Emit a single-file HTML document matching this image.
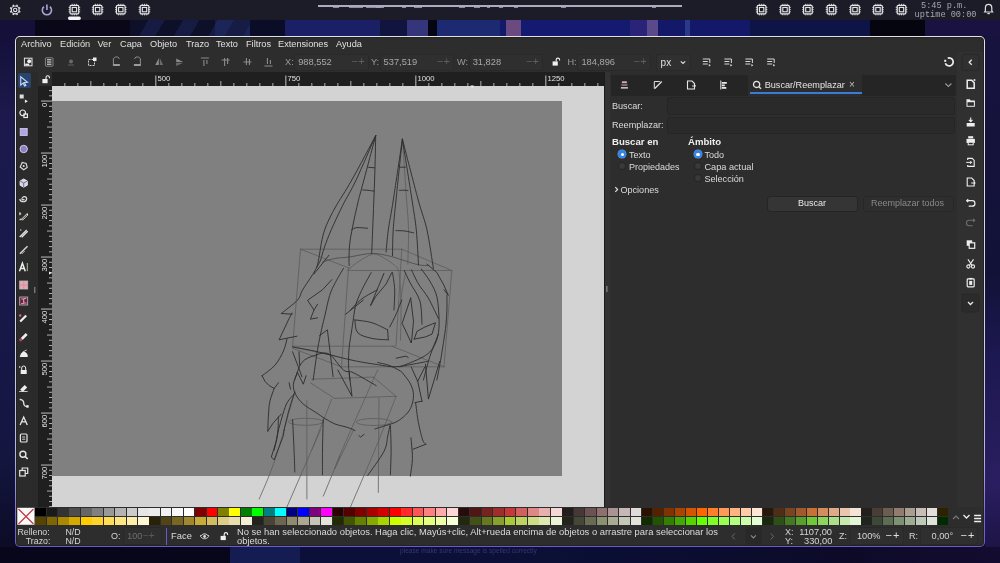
<!DOCTYPE html>
<html><head><meta charset="utf-8"><style>
*{box-sizing:border-box;margin:0;padding:0}
html,body{width:1000px;height:563px;overflow:hidden;background:#0c0a22;font-family:"Liberation Sans",sans-serif;color:#dcdcdc;position:relative}
.a{position:absolute}
.t{position:absolute;white-space:nowrap;line-height:1;transform:translateZ(0)}
svg.o{position:absolute;left:0;top:0;width:1000px;height:563px;overflow:visible}
</style></head><body>
<div class="a" style="left:0px;top:0px;width:1000px;height:563px;background:#0c0a24;"></div>
<div class="a" style="left:0px;top:20px;width:35px;height:16px;background:#15103a;"></div>
<div class="a" style="left:35px;top:20px;width:95px;height:16px;background:#0a0818;"></div>
<div class="a" style="left:130px;top:20px;width:85px;height:16px;background:#0e0f28;"></div>
<div class="a" style="left:215px;top:20px;width:35px;height:16px;background:#161c44;"></div>
<div class="a" style="left:250px;top:20px;width:35px;height:16px;background:#0b0c26;"></div>
<div class="a" style="left:285px;top:20px;width:95px;height:16px;background:#1a1f66;"></div>
<div class="a" style="left:380px;top:20px;width:27px;height:16px;background:#10143e;"></div>
<div class="a" style="left:407px;top:20px;width:21px;height:16px;background:#34357a;"></div>
<div class="a" style="left:428px;top:20px;width:9px;height:16px;background:#050514;"></div>
<div class="a" style="left:437px;top:20px;width:63px;height:16px;background:#1d2a72;"></div>
<div class="a" style="left:500px;top:20px;width:6px;height:16px;background:#141a6a;"></div>
<div class="a" style="left:506px;top:20px;width:15px;height:16px;background:#6a4a80;"></div>
<div class="a" style="left:521px;top:20px;width:109px;height:16px;background:#141a70;"></div>
<div class="a" style="left:630px;top:20px;width:17px;height:16px;background:#2a2478;"></div>
<div class="a" style="left:647px;top:20px;width:11px;height:16px;background:#5a4a8a;"></div>
<div class="a" style="left:658px;top:20px;width:27px;height:16px;background:#131968;"></div>
<div class="a" style="left:685px;top:20px;width:5px;height:16px;background:#2a3a8a;"></div>
<div class="a" style="left:690px;top:20px;width:60px;height:16px;background:#131968;"></div>
<div class="a" style="left:750px;top:20px;width:120px;height:16px;background:#0e1446;"></div>
<div class="a" style="left:870px;top:20px;width:55px;height:16px;background:#050510;"></div>
<div class="a" style="left:925px;top:20px;width:75px;height:16px;background:#1a1240;"></div>
<div class="a" style="left:130px;top:20px;width:120px;height:16px;background:repeating-linear-gradient(120deg,transparent 0 16px,rgba(40,60,140,.28) 16px 30px)"></div>
<div class="a" style="left:0;top:36px;width:15px;height:527px;background:linear-gradient(180deg,#14103a 0%,#1c1a4c 15%,#18184a 50%,#141640 80%,#0a0a20 100%)"></div>
<div class="a" style="left:985px;top:36px;width:15px;height:527px;background:linear-gradient(180deg,#17133f 0%,#121238 45%,#1c1850 60%,#2a1e60 85%,#1a1240 100%)"></div>
<div class="a" style="left:0px;top:547px;width:230px;height:16px;background:#07061a;"></div>
<div class="a" style="left:230px;top:547px;width:70px;height:16px;background:#141c52;"></div>
<div class="a" style="left:300px;top:547px;width:200px;height:16px;background:#0c1038;"></div>
<div class="a" style="left:500px;top:547px;width:500px;height:16px;background:linear-gradient(90deg,#0c1038 0%,#0b0d30 40%,#0d0a28 70%,#140c30 100%)"></div>
<span class="t" style="left:400px;top:548.2px;font-size:6.6px;color:#34386e;font-weight:normal;font-family:'Liberation Sans',sans-serif;">please make sure message is spelled correctly</span>
<div class="a" style="left:0px;top:0px;width:1000px;height:20px;background:#1b1c28;"></div>
<span class="t" style="left:921px;top:1.8px;font-size:8.6px;color:#a4a4b4;font-weight:normal;font-family:'Liberation Mono',sans-serif;">5:45 p.m.</span>
<span class="t" style="left:914.6px;top:10.6px;font-size:8.6px;color:#a4a4b4;font-weight:normal;font-family:'Liberation Mono',sans-serif;">uptime 00:00</span>
<div class="a" style="left:15px;top:36px;width:970px;height:511px;border-radius:5px;background:linear-gradient(180deg,#e2e2e6 0%,#d2d2da 60%,#b8b2dc 82%,#7a6ad4 94%,#6a5acc 100%)"></div>
<div class="a" style="left:16.2px;top:37.2px;width:967.6px;height:508.6px;background:#222222;border-radius:4px"></div>
<div class="a" style="left:17px;top:38px;width:966px;height:507px;background:#2d2d2d;border-radius:3px"></div>
<span class="t" style="left:21px;top:40px;font-size:9.2px;color:#e0e0e0;font-weight:normal;font-family:'Liberation Sans',sans-serif;">Archivo</span>
<span class="t" style="left:60px;top:40px;font-size:9.2px;color:#e0e0e0;font-weight:normal;font-family:'Liberation Sans',sans-serif;">Edición</span>
<span class="t" style="left:97.5px;top:40px;font-size:9.2px;color:#e0e0e0;font-weight:normal;font-family:'Liberation Sans',sans-serif;">Ver</span>
<span class="t" style="left:120px;top:40px;font-size:9.2px;color:#e0e0e0;font-weight:normal;font-family:'Liberation Sans',sans-serif;">Capa</span>
<span class="t" style="left:150px;top:40px;font-size:9.2px;color:#e0e0e0;font-weight:normal;font-family:'Liberation Sans',sans-serif;">Objeto</span>
<span class="t" style="left:186px;top:40px;font-size:9.2px;color:#e0e0e0;font-weight:normal;font-family:'Liberation Sans',sans-serif;">Trazo</span>
<span class="t" style="left:216px;top:40px;font-size:9.2px;color:#e0e0e0;font-weight:normal;font-family:'Liberation Sans',sans-serif;">Texto</span>
<span class="t" style="left:246px;top:40px;font-size:9.2px;color:#e0e0e0;font-weight:normal;font-family:'Liberation Sans',sans-serif;">Filtros</span>
<span class="t" style="left:278px;top:40px;font-size:9.2px;color:#e0e0e0;font-weight:normal;font-family:'Liberation Sans',sans-serif;">Extensiones</span>
<span class="t" style="left:336px;top:40px;font-size:9.2px;color:#e0e0e0;font-weight:normal;font-family:'Liberation Sans',sans-serif;">Ayuda</span>
<span class="t" style="left:285px;top:58px;font-size:9.2px;color:#9a9a9a;font-weight:normal;font-family:'Liberation Sans',sans-serif;">X:</span>
<div class="a" style="left:294px;top:53.5px;width:75px;height:17px;border:1px solid #292929;background:#2f2f2f;border-radius:3px"></div>
<span class="t" style="left:298.2px;top:58px;font-size:9.3px;color:#a8a8a8;font-weight:normal;font-family:'Liberation Sans',sans-serif;">988,552</span>
<span class="t" style="left:351.5px;top:56.2px;font-size:11px;color:#5f5f5f;font-weight:normal;font-family:'Liberation Sans',sans-serif;letter-spacing:0.3px">−+</span>
<span class="t" style="left:371px;top:58px;font-size:9.2px;color:#9a9a9a;font-weight:normal;font-family:'Liberation Sans',sans-serif;">Y:</span>
<div class="a" style="left:379.5px;top:53.5px;width:74.5px;height:17px;border:1px solid #292929;background:#2f2f2f;border-radius:3px"></div>
<span class="t" style="left:383.6px;top:58px;font-size:9.3px;color:#a8a8a8;font-weight:normal;font-family:'Liberation Sans',sans-serif;">537,519</span>
<span class="t" style="left:436.9px;top:56.2px;font-size:11px;color:#5f5f5f;font-weight:normal;font-family:'Liberation Sans',sans-serif;letter-spacing:0.3px">−+</span>
<span class="t" style="left:457px;top:58px;font-size:9.2px;color:#9a9a9a;font-weight:normal;font-family:'Liberation Sans',sans-serif;">W:</span>
<div class="a" style="left:469px;top:53.5px;width:74px;height:17px;border:1px solid #292929;background:#2f2f2f;border-radius:3px"></div>
<span class="t" style="left:472.7px;top:58px;font-size:9.3px;color:#a8a8a8;font-weight:normal;font-family:'Liberation Sans',sans-serif;">31,828</span>
<span class="t" style="left:525.9px;top:56.2px;font-size:11px;color:#5f5f5f;font-weight:normal;font-family:'Liberation Sans',sans-serif;letter-spacing:0.3px">−+</span>
<span class="t" style="left:567.4px;top:58px;font-size:9.2px;color:#9a9a9a;font-weight:normal;font-family:'Liberation Sans',sans-serif;">H:</span>
<div class="a" style="left:576.6px;top:53.5px;width:74.79999999999995px;height:17px;border:1px solid #292929;background:#2f2f2f;border-radius:3px"></div>
<span class="t" style="left:581.4px;top:58px;font-size:9.3px;color:#a8a8a8;font-weight:normal;font-family:'Liberation Sans',sans-serif;">184,896</span>
<span class="t" style="left:633.5px;top:56.2px;font-size:11px;color:#5f5f5f;font-weight:normal;font-family:'Liberation Sans',sans-serif;letter-spacing:0.3px">−+</span>
<div class="a" style="left:655.8px;top:53.5px;width:35.6px;height:17px;border:1px solid #292929;background:#303030;border-radius:3px"></div>
<span class="t" style="left:660.6px;top:57.5px;font-size:10px;color:#e0e0e0;font-weight:normal;font-family:'Liberation Sans',sans-serif;">px</span>
<div class="a" style="left:17px;top:72px;width:14px;height:435px;background:#2b2b2b;"></div>
<div class="a" style="left:31px;top:72px;width:7px;height:435px;background:#2a2a2a;"></div>
<div class="a" style="left:17.5px;top:73px;width:13px;height:14.5px;background:#2a4470;border-radius:2px"></div>
<div class="a" style="left:52px;top:72px;width:552px;height:14px;background:#1f1f1f;"></div>
<div class="a" style="left:38px;top:86px;width:14px;height:421px;background:#1f1f1f;"></div>
<div class="a" style="left:52px;top:86px;width:552px;height:421px;background:#d3d3d3;"></div>
<div class="a" style="left:52px;top:101px;width:510px;height:375px;background:#808080;"></div>
<div class="a" style="left:604px;top:72px;width:6px;height:435px;background:#333333;"></div>
<div class="a" style="left:604px;top:72px;width:1px;height:435px;background:#1c1c1c;"></div>
<div class="a" style="left:610px;top:72px;width:347px;height:435px;background:#2d2d2d;"></div>
<div class="a" style="left:611px;top:75px;width:345px;height:21px;background:#252525;"></div>
<div class="a" style="left:748px;top:75px;width:114px;height:21px;background:#2c2c2c;"></div>
<div class="a" style="left:750px;top:92px;width:112px;height:2px;background:#3a7bd5;"></div>
<div class="a" style="left:957px;top:52px;width:26px;height:455px;background:#303030;"></div>
<span class="t" style="left:612px;top:101.5px;font-size:9.1px;color:#dcdcdc;font-weight:normal;font-family:'Liberation Sans',sans-serif;">Buscar:</span>
<div class="a" style="left:666.5px;top:96.8px;width:288px;height:18px;border:1px solid #252525;background:#2a2a2a;border-radius:3px"></div>
<span class="t" style="left:612px;top:121px;font-size:9.1px;color:#dcdcdc;font-weight:normal;font-family:'Liberation Sans',sans-serif;">Reemplazar:</span>
<div class="a" style="left:666.5px;top:117px;width:288px;height:16.5px;border:1px solid #252525;background:#2a2a2a;border-radius:3px"></div>
<span class="t" style="left:612px;top:136.5px;font-size:9.6px;color:#eeeeee;font-weight:bold;font-family:'Liberation Sans',sans-serif;">Buscar en</span>
<span class="t" style="left:688px;top:136.5px;font-size:9.6px;color:#eeeeee;font-weight:bold;font-family:'Liberation Sans',sans-serif;">Ámbito</span>
<div class="a" style="left:618.4px;top:150.4px;width:8px;height:8px;border-radius:50%;background:#3584e4;box-shadow:0 0 0 0.5px #5a9ae8"></div>
<div class="a" style="left:620.8px;top:152.8px;width:3.2px;height:3.2px;border-radius:50%;background:#fff"></div>
<span class="t" style="left:629px;top:150.5px;font-size:9px;color:#dcdcdc;font-weight:normal;font-family:'Liberation Sans',sans-serif;">Texto</span>
<div class="a" style="left:618.4px;top:162.4px;width:8px;height:8px;border-radius:50%;background:#3a3a3a;border:1px solid #242424"></div>
<span class="t" style="left:629px;top:162.5px;font-size:9px;color:#dcdcdc;font-weight:normal;font-family:'Liberation Sans',sans-serif;">Propiedades</span>
<div class="a" style="left:694px;top:150.4px;width:8px;height:8px;border-radius:50%;background:#3584e4;box-shadow:0 0 0 0.5px #5a9ae8"></div>
<div class="a" style="left:696.4px;top:152.8px;width:3.2px;height:3.2px;border-radius:50%;background:#fff"></div>
<span class="t" style="left:704.4px;top:150.5px;font-size:9px;color:#dcdcdc;font-weight:normal;font-family:'Liberation Sans',sans-serif;">Todo</span>
<div class="a" style="left:694px;top:162.4px;width:8px;height:8px;border-radius:50%;background:#3a3a3a;border:1px solid #242424"></div>
<span class="t" style="left:704.4px;top:162.5px;font-size:9.2px;color:#dcdcdc;font-weight:normal;font-family:'Liberation Sans',sans-serif;">Capa actual</span>
<div class="a" style="left:694px;top:174.4px;width:8px;height:8px;border-radius:50%;background:#3a3a3a;border:1px solid #242424"></div>
<span class="t" style="left:704.4px;top:174.5px;font-size:9.1px;color:#dcdcdc;font-weight:normal;font-family:'Liberation Sans',sans-serif;">Selección</span>
<span class="t" style="left:620.4px;top:185.5px;font-size:9.1px;color:#dcdcdc;font-weight:normal;font-family:'Liberation Sans',sans-serif;">Opciones</span>
<div class="a" style="left:766.6px;top:195.5px;width:91.6px;height:16px;border:1px solid #252525;background:#353535;border-radius:3px"></div>
<span class="t" style="left:798px;top:199px;font-size:9px;color:#e8e8e8;font-weight:normal;font-family:'Liberation Sans',sans-serif;">Buscar</span>
<div class="a" style="left:862.7px;top:195.5px;width:91.6px;height:16px;border:1px solid #282828;background:#2e2e2e;border-radius:3px"></div>
<span class="t" style="left:871px;top:199px;font-size:9px;color:#8a8a8a;font-weight:normal;font-family:'Liberation Sans',sans-serif;">Reemplazar todos</span>
<span class="t" style="left:764.7px;top:80.5px;font-size:9.15px;color:#e4e4e4;font-weight:normal;font-family:'Liberation Sans',sans-serif;">Buscar/Reemplazar</span>
<span class="t" style="left:849px;top:80px;font-size:10px;color:#bdbdbd;font-weight:normal;font-family:'Liberation Sans',sans-serif;">×</span>
<svg class="o" viewBox="0 0 1000 563" style="shape-rendering:crispEdges"><defs><clipPath id="pc"><rect x="35" y="505" width="913.5" height="22"/></clipPath></defs><g clip-path="url(#pc)"><rect x="35.20" y="507.8" width="10.62" height="8.2" fill="#000000"/><rect x="35.20" y="516.6" width="10.62" height="8.4" fill="#554400"/><rect x="46.62" y="507.8" width="10.62" height="8.2" fill="#1a1a1a"/><rect x="46.62" y="516.6" width="10.62" height="8.4" fill="#806600"/><rect x="58.04" y="507.8" width="10.62" height="8.2" fill="#333333"/><rect x="58.04" y="516.6" width="10.62" height="8.4" fill="#aa8800"/><rect x="69.46" y="507.8" width="10.62" height="8.2" fill="#4d4d4d"/><rect x="69.46" y="516.6" width="10.62" height="8.4" fill="#d4aa00"/><rect x="80.89" y="507.8" width="10.62" height="8.2" fill="#666666"/><rect x="80.89" y="516.6" width="10.62" height="8.4" fill="#ffcc00"/><rect x="92.31" y="507.8" width="10.62" height="8.2" fill="#808080"/><rect x="92.31" y="516.6" width="10.62" height="8.4" fill="#ffd42a"/><rect x="103.73" y="507.8" width="10.62" height="8.2" fill="#999999"/><rect x="103.73" y="516.6" width="10.62" height="8.4" fill="#ffdd55"/><rect x="115.15" y="507.8" width="10.62" height="8.2" fill="#b3b3b3"/><rect x="115.15" y="516.6" width="10.62" height="8.4" fill="#ffe680"/><rect x="126.57" y="507.8" width="10.62" height="8.2" fill="#cccccc"/><rect x="126.57" y="516.6" width="10.62" height="8.4" fill="#ffeeaa"/><rect x="137.99" y="507.8" width="10.62" height="8.2" fill="#e6e6e6"/><rect x="137.99" y="516.6" width="10.62" height="8.4" fill="#fff6d5"/><rect x="149.41" y="507.8" width="10.62" height="8.2" fill="#ececec"/><rect x="149.41" y="516.6" width="10.62" height="8.4" fill="#28220b"/><rect x="160.84" y="507.8" width="10.62" height="8.2" fill="#f2f2f2"/><rect x="160.84" y="516.6" width="10.62" height="8.4" fill="#504416"/><rect x="172.26" y="507.8" width="10.62" height="8.2" fill="#f9f9f9"/><rect x="172.26" y="516.6" width="10.62" height="8.4" fill="#786721"/><rect x="183.68" y="507.8" width="10.62" height="8.2" fill="#ffffff"/><rect x="183.68" y="516.6" width="10.62" height="8.4" fill="#a0892c"/><rect x="195.10" y="507.8" width="10.66" height="8.2" fill="#800000"/><rect x="195.10" y="516.6" width="10.66" height="8.4" fill="#c8ab37"/><rect x="206.56" y="507.8" width="10.66" height="8.2" fill="#ff0000"/><rect x="206.56" y="516.6" width="10.66" height="8.4" fill="#d3bc5f"/><rect x="218.01" y="507.8" width="10.66" height="8.2" fill="#808000"/><rect x="218.01" y="516.6" width="10.66" height="8.4" fill="#decd87"/><rect x="229.47" y="507.8" width="10.66" height="8.2" fill="#ffff00"/><rect x="229.47" y="516.6" width="10.66" height="8.4" fill="#e9ddaf"/><rect x="240.93" y="507.8" width="10.66" height="8.2" fill="#008000"/><rect x="240.93" y="516.6" width="10.66" height="8.4" fill="#f4eed7"/><rect x="252.38" y="507.8" width="10.66" height="8.2" fill="#00ff00"/><rect x="252.38" y="516.6" width="10.66" height="8.4" fill="#24221c"/><rect x="263.84" y="507.8" width="10.66" height="8.2" fill="#008080"/><rect x="263.84" y="516.6" width="10.66" height="8.4" fill="#484537"/><rect x="275.30" y="507.8" width="10.66" height="8.2" fill="#00ffff"/><rect x="275.30" y="516.6" width="10.66" height="8.4" fill="#6c6753"/><rect x="286.75" y="507.8" width="10.66" height="8.2" fill="#000080"/><rect x="286.75" y="516.6" width="10.66" height="8.4" fill="#918a6f"/><rect x="298.21" y="507.8" width="10.66" height="8.2" fill="#0000ff"/><rect x="298.21" y="516.6" width="10.66" height="8.4" fill="#aca793"/><rect x="309.67" y="507.8" width="10.66" height="8.2" fill="#800080"/><rect x="309.67" y="516.6" width="10.66" height="8.4" fill="#c8c4b7"/><rect x="321.12" y="507.8" width="10.66" height="8.2" fill="#ff00ff"/><rect x="321.12" y="516.6" width="10.66" height="8.4" fill="#e3e2db"/><rect x="332.58" y="507.8" width="10.66" height="8.2" fill="#2b0000"/><rect x="332.58" y="516.6" width="10.66" height="8.4" fill="#222b00"/><rect x="344.03" y="507.8" width="10.66" height="8.2" fill="#550000"/><rect x="344.03" y="516.6" width="10.66" height="8.4" fill="#445500"/><rect x="355.49" y="507.8" width="10.66" height="8.2" fill="#800000"/><rect x="355.49" y="516.6" width="10.66" height="8.4" fill="#668000"/><rect x="366.95" y="507.8" width="10.66" height="8.2" fill="#aa0000"/><rect x="366.95" y="516.6" width="10.66" height="8.4" fill="#88aa00"/><rect x="378.40" y="507.8" width="10.66" height="8.2" fill="#d40000"/><rect x="378.40" y="516.6" width="10.66" height="8.4" fill="#aad400"/><rect x="389.86" y="507.8" width="10.66" height="8.2" fill="#ff0000"/><rect x="389.86" y="516.6" width="10.66" height="8.4" fill="#ccff00"/><rect x="401.32" y="507.8" width="10.66" height="8.2" fill="#ff2a2a"/><rect x="401.32" y="516.6" width="10.66" height="8.4" fill="#d4ff2a"/><rect x="412.77" y="507.8" width="10.66" height="8.2" fill="#ff5555"/><rect x="412.77" y="516.6" width="10.66" height="8.4" fill="#ddff55"/><rect x="424.23" y="507.8" width="10.66" height="8.2" fill="#ff8080"/><rect x="424.23" y="516.6" width="10.66" height="8.4" fill="#e5ff80"/><rect x="435.69" y="507.8" width="10.66" height="8.2" fill="#ffaaaa"/><rect x="435.69" y="516.6" width="10.66" height="8.4" fill="#eeffaa"/><rect x="447.14" y="507.8" width="10.66" height="8.2" fill="#ffd5d5"/><rect x="447.14" y="516.6" width="10.66" height="8.4" fill="#f6ffd5"/><rect x="458.60" y="507.8" width="10.73" height="8.2" fill="#280b0b"/><rect x="458.60" y="516.6" width="10.73" height="8.4" fill="#22280b"/><rect x="470.13" y="507.8" width="10.73" height="8.2" fill="#501616"/><rect x="470.13" y="516.6" width="10.73" height="8.4" fill="#445016"/><rect x="481.67" y="507.8" width="10.73" height="8.2" fill="#782121"/><rect x="481.67" y="516.6" width="10.73" height="8.4" fill="#677821"/><rect x="493.20" y="507.8" width="10.73" height="8.2" fill="#a02c2c"/><rect x="493.20" y="516.6" width="10.73" height="8.4" fill="#89a02c"/><rect x="504.73" y="507.8" width="10.73" height="8.2" fill="#c83737"/><rect x="504.73" y="516.6" width="10.73" height="8.4" fill="#abc837"/><rect x="516.27" y="507.8" width="10.73" height="8.2" fill="#d35f5f"/><rect x="516.27" y="516.6" width="10.73" height="8.4" fill="#bcd35f"/><rect x="527.80" y="507.8" width="10.73" height="8.2" fill="#de8787"/><rect x="527.80" y="516.6" width="10.73" height="8.4" fill="#cdde87"/><rect x="539.33" y="507.8" width="10.73" height="8.2" fill="#e9afaf"/><rect x="539.33" y="516.6" width="10.73" height="8.4" fill="#dde9af"/><rect x="550.87" y="507.8" width="10.73" height="8.2" fill="#f4d7d7"/><rect x="550.87" y="516.6" width="10.73" height="8.4" fill="#eef4d7"/><rect x="562.40" y="507.8" width="10.57" height="8.2" fill="#241c1c"/><rect x="562.40" y="516.6" width="10.57" height="8.4" fill="#22241c"/><rect x="573.77" y="507.8" width="10.57" height="8.2" fill="#483737"/><rect x="573.77" y="516.6" width="10.57" height="8.4" fill="#454837"/><rect x="585.14" y="507.8" width="10.57" height="8.2" fill="#6c5353"/><rect x="585.14" y="516.6" width="10.57" height="8.4" fill="#676c53"/><rect x="596.51" y="507.8" width="10.57" height="8.2" fill="#916f6f"/><rect x="596.51" y="516.6" width="10.57" height="8.4" fill="#8a916f"/><rect x="607.89" y="507.8" width="10.57" height="8.2" fill="#ac9393"/><rect x="607.89" y="516.6" width="10.57" height="8.4" fill="#a7ac93"/><rect x="619.26" y="507.8" width="10.57" height="8.2" fill="#c8b7b7"/><rect x="619.26" y="516.6" width="10.57" height="8.4" fill="#c4c8b7"/><rect x="630.63" y="507.8" width="10.57" height="8.2" fill="#e3dbdb"/><rect x="630.63" y="516.6" width="10.57" height="8.4" fill="#e2e3db"/><rect x="642.00" y="507.8" width="10.20" height="8.2" fill="#2b1100"/><rect x="642.00" y="516.6" width="10.20" height="8.4" fill="#112b00"/><rect x="653.00" y="507.8" width="10.20" height="8.2" fill="#552200"/><rect x="653.00" y="516.6" width="10.20" height="8.4" fill="#225500"/><rect x="664.00" y="507.8" width="10.20" height="8.2" fill="#803300"/><rect x="664.00" y="516.6" width="10.20" height="8.4" fill="#338000"/><rect x="675.00" y="507.8" width="10.20" height="8.2" fill="#aa4400"/><rect x="675.00" y="516.6" width="10.20" height="8.4" fill="#44aa00"/><rect x="686.00" y="507.8" width="10.20" height="8.2" fill="#d45500"/><rect x="686.00" y="516.6" width="10.20" height="8.4" fill="#55d400"/><rect x="697.00" y="507.8" width="10.20" height="8.2" fill="#ff6600"/><rect x="697.00" y="516.6" width="10.20" height="8.4" fill="#66ff00"/><rect x="708.00" y="507.8" width="10.20" height="8.2" fill="#ff7f2a"/><rect x="708.00" y="516.6" width="10.20" height="8.4" fill="#7fff2a"/><rect x="719.00" y="507.8" width="10.20" height="8.2" fill="#ff9955"/><rect x="719.00" y="516.6" width="10.20" height="8.4" fill="#99ff55"/><rect x="730.00" y="507.8" width="10.20" height="8.2" fill="#ffb380"/><rect x="730.00" y="516.6" width="10.20" height="8.4" fill="#b3ff80"/><rect x="741.00" y="507.8" width="10.20" height="8.2" fill="#ffccaa"/><rect x="741.00" y="516.6" width="10.20" height="8.4" fill="#ccffaa"/><rect x="752.00" y="507.8" width="10.20" height="8.2" fill="#ffe6d5"/><rect x="752.00" y="516.6" width="10.20" height="8.4" fill="#e5ffd5"/><rect x="763.00" y="507.8" width="10.13" height="8.2" fill="#28170b"/><rect x="763.00" y="516.6" width="10.13" height="8.4" fill="#17280b"/><rect x="773.93" y="507.8" width="10.13" height="8.2" fill="#502d16"/><rect x="773.93" y="516.6" width="10.13" height="8.4" fill="#2d5016"/><rect x="784.87" y="507.8" width="10.13" height="8.2" fill="#784421"/><rect x="784.87" y="516.6" width="10.13" height="8.4" fill="#447821"/><rect x="795.80" y="507.8" width="10.13" height="8.2" fill="#a05a2c"/><rect x="795.80" y="516.6" width="10.13" height="8.4" fill="#5aa02c"/><rect x="806.73" y="507.8" width="10.13" height="8.2" fill="#c87137"/><rect x="806.73" y="516.6" width="10.13" height="8.4" fill="#71c837"/><rect x="817.67" y="507.8" width="10.13" height="8.2" fill="#d38d5f"/><rect x="817.67" y="516.6" width="10.13" height="8.4" fill="#8dd35f"/><rect x="828.60" y="507.8" width="10.13" height="8.2" fill="#deaa87"/><rect x="828.60" y="516.6" width="10.13" height="8.4" fill="#aade87"/><rect x="839.53" y="507.8" width="10.13" height="8.2" fill="#e9c6af"/><rect x="839.53" y="516.6" width="10.13" height="8.4" fill="#c6e9af"/><rect x="850.47" y="507.8" width="10.13" height="8.2" fill="#f4e3d7"/><rect x="850.47" y="516.6" width="10.13" height="8.4" fill="#e3f4d7"/><rect x="861.40" y="507.8" width="10.10" height="8.2" fill="#241f1c"/><rect x="861.40" y="516.6" width="10.10" height="8.4" fill="#1f241c"/><rect x="872.30" y="507.8" width="10.10" height="8.2" fill="#483e37"/><rect x="872.30" y="516.6" width="10.10" height="8.4" fill="#3e4837"/><rect x="883.20" y="507.8" width="10.10" height="8.2" fill="#6c5d53"/><rect x="883.20" y="516.6" width="10.10" height="8.4" fill="#5d6c53"/><rect x="894.10" y="507.8" width="10.10" height="8.2" fill="#917c6f"/><rect x="894.10" y="516.6" width="10.10" height="8.4" fill="#7c916f"/><rect x="905.00" y="507.8" width="10.10" height="8.2" fill="#ac9d93"/><rect x="905.00" y="516.6" width="10.10" height="8.4" fill="#9dac93"/><rect x="915.90" y="507.8" width="10.10" height="8.2" fill="#c8beb7"/><rect x="915.90" y="516.6" width="10.10" height="8.4" fill="#bec8b7"/><rect x="926.80" y="507.8" width="10.10" height="8.2" fill="#e3dedb"/><rect x="926.80" y="516.6" width="10.10" height="8.4" fill="#dee3db"/><rect x="937.70" y="507.8" width="10.10" height="8.2" fill="#2b2200"/><rect x="937.70" y="516.6" width="10.10" height="8.4" fill="#002b00"/></g></svg>
<svg class="o" viewBox="0 0 1000 563"><rect x="17.3" y="507.8" width="17.2" height="17" fill="#fafafa"/><path d="M18.5 509 L33.5 524 M33.5 509 L18.5 524" stroke="#c0343c" stroke-width="1.1"/></svg>
<span class="t" style="left:17.4px;top:527.6px;font-size:8.8px;color:#d6d6d6;font-weight:normal;font-family:'Liberation Sans',sans-serif;">Relleno:</span>
<span class="t" style="left:65.4px;top:527.6px;font-size:8.8px;color:#d6d6d6;font-weight:normal;font-family:'Liberation Sans',sans-serif;">N/D</span>
<span class="t" style="left:25.8px;top:536.6px;font-size:8.8px;color:#d6d6d6;font-weight:normal;font-family:'Liberation Sans',sans-serif;">Trazo:</span>
<span class="t" style="left:65.4px;top:536.6px;font-size:8.8px;color:#d6d6d6;font-weight:normal;font-family:'Liberation Sans',sans-serif;">N/D</span>
<span class="t" style="left:111px;top:531.5px;font-size:9px;color:#d6d6d6;font-weight:normal;font-family:'Liberation Sans',sans-serif;">O:</span>
<div class="a" style="left:123px;top:527px;width:38.5px;height:18px;border:1px solid #292929;background:#2f2f2f;border-radius:3px"></div>
<span class="t" style="left:127.3px;top:531.5px;font-size:9px;color:#6f6f6f;font-weight:normal;font-family:'Liberation Sans',sans-serif;">100</span>
<span class="t" style="left:143px;top:531px;font-size:10px;color:#5a5a5a;font-weight:normal;font-family:'Liberation Sans',sans-serif;">−+</span>
<div class="a" style="left:166.2px;top:527.5px;width:1.3px;height:17px;background:#6a5ad0;"></div>
<span class="t" style="left:171px;top:531px;font-size:9.4px;color:#dcdcdc;font-weight:normal;font-family:'Liberation Sans',sans-serif;">Face</span>
<span class="t" style="left:237px;top:527px;font-size:9.4px;color:#dcdcdc;font-weight:normal;font-family:'Liberation Sans',sans-serif;">No se han seleccionado objetos. Haga clic, Mayús+clic, Alt+rueda encima de objetos o arrastre para seleccionar los</span>
<span class="t" style="left:237px;top:535.8px;font-size:9.4px;color:#dcdcdc;font-weight:normal;font-family:'Liberation Sans',sans-serif;">objetos.</span>
<div class="a" style="left:744.8px;top:526.5px;width:17.6px;height:18.5px;border:1px solid #2a2a2a;background:#282828;border-radius:2px"></div>
<span class="t" style="left:785px;top:527.6px;font-size:9px;color:#d6d6d6;font-weight:normal;font-family:'Liberation Sans',sans-serif;">X:</span>
<span class="t" style="left:799.2px;top:527.6px;font-size:9.26px;color:#d6d6d6;font-weight:normal;font-family:'Liberation Sans',sans-serif;">1107,00</span>
<span class="t" style="left:785px;top:536.6px;font-size:9px;color:#d6d6d6;font-weight:normal;font-family:'Liberation Sans',sans-serif;">Y:</span>
<span class="t" style="left:804px;top:536.6px;font-size:9.26px;color:#d6d6d6;font-weight:normal;font-family:'Liberation Sans',sans-serif;">330,00</span>
<span class="t" style="left:839px;top:531.5px;font-size:9px;color:#d6d6d6;font-weight:normal;font-family:'Liberation Sans',sans-serif;">Z:</span>
<div class="a" style="left:850px;top:527px;width:53.6px;height:17.5px;border:1px solid #292929;background:#2f2f2f;border-radius:3px"></div>
<span class="t" style="left:857px;top:531.5px;font-size:9.2px;color:#d6d6d6;font-weight:normal;font-family:'Liberation Sans',sans-serif;">100%</span>
<span class="t" style="left:885.5px;top:530.2px;font-size:11px;color:#e0e0e0;font-weight:normal;font-family:'Liberation Sans',sans-serif;letter-spacing:1px">−+</span>
<span class="t" style="left:909px;top:531.5px;font-size:9px;color:#d6d6d6;font-weight:normal;font-family:'Liberation Sans',sans-serif;">R:</span>
<div class="a" style="left:919.6px;top:527px;width:58.4px;height:17.5px;border:1px solid #292929;background:#2f2f2f;border-radius:3px"></div>
<span class="t" style="left:931.6px;top:531.5px;font-size:9.2px;color:#d6d6d6;font-weight:normal;font-family:'Liberation Sans',sans-serif;">0,00°</span>
<span class="t" style="left:960.5px;top:530.2px;font-size:11px;color:#e0e0e0;font-weight:normal;font-family:'Liberation Sans',sans-serif;letter-spacing:1px">−+</span>
<svg class="o" viewBox="0 0 1000 563"><rect x="64.4" y="83" width="0.9" height="3" fill="#bdbdbd"/><rect x="77.4" y="83" width="0.9" height="3" fill="#bdbdbd"/><rect x="90.4" y="81" width="0.9" height="5" fill="#bdbdbd"/><rect x="103.4" y="83" width="0.9" height="3" fill="#bdbdbd"/><rect x="116.4" y="83" width="0.9" height="3" fill="#bdbdbd"/><rect x="129.4" y="83" width="0.9" height="3" fill="#bdbdbd"/><rect x="142.4" y="83" width="0.9" height="3" fill="#bdbdbd"/><rect x="155.4" y="75.5" width="0.9" height="10.5" fill="#cfcfcf"/><rect x="168.4" y="83" width="0.9" height="3" fill="#bdbdbd"/><rect x="181.4" y="83" width="0.9" height="3" fill="#bdbdbd"/><rect x="194.4" y="83" width="0.9" height="3" fill="#bdbdbd"/><rect x="207.4" y="83" width="0.9" height="3" fill="#bdbdbd"/><rect x="220.4" y="81" width="0.9" height="5" fill="#bdbdbd"/><rect x="233.4" y="83" width="0.9" height="3" fill="#bdbdbd"/><rect x="246.4" y="83" width="0.9" height="3" fill="#bdbdbd"/><rect x="259.4" y="83" width="0.9" height="3" fill="#bdbdbd"/><rect x="272.4" y="83" width="0.9" height="3" fill="#bdbdbd"/><rect x="285.4" y="75.5" width="0.9" height="10.5" fill="#cfcfcf"/><rect x="298.4" y="83" width="0.9" height="3" fill="#bdbdbd"/><rect x="311.4" y="83" width="0.9" height="3" fill="#bdbdbd"/><rect x="324.4" y="83" width="0.9" height="3" fill="#bdbdbd"/><rect x="337.4" y="83" width="0.9" height="3" fill="#bdbdbd"/><rect x="350.4" y="81" width="0.9" height="5" fill="#bdbdbd"/><rect x="363.4" y="83" width="0.9" height="3" fill="#bdbdbd"/><rect x="376.4" y="83" width="0.9" height="3" fill="#bdbdbd"/><rect x="389.4" y="83" width="0.9" height="3" fill="#bdbdbd"/><rect x="402.4" y="83" width="0.9" height="3" fill="#bdbdbd"/><rect x="415.4" y="75.5" width="0.9" height="10.5" fill="#cfcfcf"/><rect x="428.4" y="83" width="0.9" height="3" fill="#bdbdbd"/><rect x="441.4" y="83" width="0.9" height="3" fill="#bdbdbd"/><rect x="454.4" y="83" width="0.9" height="3" fill="#bdbdbd"/><rect x="467.4" y="83" width="0.9" height="3" fill="#bdbdbd"/><rect x="480.4" y="81" width="0.9" height="5" fill="#bdbdbd"/><rect x="493.4" y="83" width="0.9" height="3" fill="#bdbdbd"/><rect x="506.4" y="83" width="0.9" height="3" fill="#bdbdbd"/><rect x="519.4" y="83" width="0.9" height="3" fill="#bdbdbd"/><rect x="532.4" y="83" width="0.9" height="3" fill="#bdbdbd"/><rect x="545.4" y="75.5" width="0.9" height="10.5" fill="#cfcfcf"/><rect x="558.4" y="83" width="0.9" height="3" fill="#bdbdbd"/><rect x="571.4" y="83" width="0.9" height="3" fill="#bdbdbd"/><rect x="584.4" y="83" width="0.9" height="3" fill="#bdbdbd"/><rect x="597.4" y="83" width="0.9" height="3" fill="#bdbdbd"/><text x="157.5" y="81.3" font-size="7.7" fill="#e0e0e0" font-family="Liberation Sans">500</text><text x="287.5" y="81.3" font-size="7.7" fill="#e0e0e0" font-family="Liberation Sans">750</text><text x="417.5" y="81.3" font-size="7.7" fill="#e0e0e0" font-family="Liberation Sans">1000</text><text x="547.5" y="81.3" font-size="7.7" fill="#e0e0e0" font-family="Liberation Sans">1250</text><rect x="49" y="90.2" width="3" height="0.9" fill="#bdbdbd"/><rect x="49" y="95.4" width="3" height="0.9" fill="#bdbdbd"/><rect x="41" y="100.6" width="11" height="0.9" fill="#cfcfcf"/><rect x="49" y="105.8" width="3" height="0.9" fill="#bdbdbd"/><rect x="49" y="111.0" width="3" height="0.9" fill="#bdbdbd"/><rect x="49" y="116.2" width="3" height="0.9" fill="#bdbdbd"/><rect x="49" y="121.4" width="3" height="0.9" fill="#bdbdbd"/><rect x="47" y="126.6" width="5" height="0.9" fill="#bdbdbd"/><rect x="49" y="131.8" width="3" height="0.9" fill="#bdbdbd"/><rect x="49" y="137.0" width="3" height="0.9" fill="#bdbdbd"/><rect x="49" y="142.2" width="3" height="0.9" fill="#bdbdbd"/><rect x="49" y="147.4" width="3" height="0.9" fill="#bdbdbd"/><rect x="41" y="152.6" width="11" height="0.9" fill="#cfcfcf"/><rect x="49" y="157.8" width="3" height="0.9" fill="#bdbdbd"/><rect x="49" y="163.0" width="3" height="0.9" fill="#bdbdbd"/><rect x="49" y="168.2" width="3" height="0.9" fill="#bdbdbd"/><rect x="49" y="173.4" width="3" height="0.9" fill="#bdbdbd"/><rect x="47" y="178.6" width="5" height="0.9" fill="#bdbdbd"/><rect x="49" y="183.8" width="3" height="0.9" fill="#bdbdbd"/><rect x="49" y="189.0" width="3" height="0.9" fill="#bdbdbd"/><rect x="49" y="194.2" width="3" height="0.9" fill="#bdbdbd"/><rect x="49" y="199.4" width="3" height="0.9" fill="#bdbdbd"/><rect x="41" y="204.6" width="11" height="0.9" fill="#cfcfcf"/><rect x="49" y="209.8" width="3" height="0.9" fill="#bdbdbd"/><rect x="49" y="215.0" width="3" height="0.9" fill="#bdbdbd"/><rect x="49" y="220.2" width="3" height="0.9" fill="#bdbdbd"/><rect x="49" y="225.4" width="3" height="0.9" fill="#bdbdbd"/><rect x="47" y="230.6" width="5" height="0.9" fill="#bdbdbd"/><rect x="49" y="235.8" width="3" height="0.9" fill="#bdbdbd"/><rect x="49" y="241.0" width="3" height="0.9" fill="#bdbdbd"/><rect x="49" y="246.2" width="3" height="0.9" fill="#bdbdbd"/><rect x="49" y="251.4" width="3" height="0.9" fill="#bdbdbd"/><rect x="41" y="256.6" width="11" height="0.9" fill="#cfcfcf"/><rect x="49" y="261.8" width="3" height="0.9" fill="#bdbdbd"/><rect x="49" y="267.0" width="3" height="0.9" fill="#bdbdbd"/><rect x="49" y="272.2" width="3" height="0.9" fill="#bdbdbd"/><rect x="49" y="277.4" width="3" height="0.9" fill="#bdbdbd"/><rect x="47" y="282.6" width="5" height="0.9" fill="#bdbdbd"/><rect x="49" y="287.8" width="3" height="0.9" fill="#bdbdbd"/><rect x="49" y="293.0" width="3" height="0.9" fill="#bdbdbd"/><rect x="49" y="298.2" width="3" height="0.9" fill="#bdbdbd"/><rect x="49" y="303.4" width="3" height="0.9" fill="#bdbdbd"/><rect x="41" y="308.6" width="11" height="0.9" fill="#cfcfcf"/><rect x="49" y="313.8" width="3" height="0.9" fill="#bdbdbd"/><rect x="49" y="319.0" width="3" height="0.9" fill="#bdbdbd"/><rect x="49" y="324.2" width="3" height="0.9" fill="#bdbdbd"/><rect x="49" y="329.4" width="3" height="0.9" fill="#bdbdbd"/><rect x="47" y="334.6" width="5" height="0.9" fill="#bdbdbd"/><rect x="49" y="339.8" width="3" height="0.9" fill="#bdbdbd"/><rect x="49" y="345.0" width="3" height="0.9" fill="#bdbdbd"/><rect x="49" y="350.2" width="3" height="0.9" fill="#bdbdbd"/><rect x="49" y="355.4" width="3" height="0.9" fill="#bdbdbd"/><rect x="41" y="360.6" width="11" height="0.9" fill="#cfcfcf"/><rect x="49" y="365.8" width="3" height="0.9" fill="#bdbdbd"/><rect x="49" y="371.0" width="3" height="0.9" fill="#bdbdbd"/><rect x="49" y="376.2" width="3" height="0.9" fill="#bdbdbd"/><rect x="49" y="381.4" width="3" height="0.9" fill="#bdbdbd"/><rect x="47" y="386.6" width="5" height="0.9" fill="#bdbdbd"/><rect x="49" y="391.8" width="3" height="0.9" fill="#bdbdbd"/><rect x="49" y="397.0" width="3" height="0.9" fill="#bdbdbd"/><rect x="49" y="402.2" width="3" height="0.9" fill="#bdbdbd"/><rect x="49" y="407.4" width="3" height="0.9" fill="#bdbdbd"/><rect x="41" y="412.6" width="11" height="0.9" fill="#cfcfcf"/><rect x="49" y="417.8" width="3" height="0.9" fill="#bdbdbd"/><rect x="49" y="423.0" width="3" height="0.9" fill="#bdbdbd"/><rect x="49" y="428.2" width="3" height="0.9" fill="#bdbdbd"/><rect x="49" y="433.4" width="3" height="0.9" fill="#bdbdbd"/><rect x="47" y="438.6" width="5" height="0.9" fill="#bdbdbd"/><rect x="49" y="443.8" width="3" height="0.9" fill="#bdbdbd"/><rect x="49" y="449.0" width="3" height="0.9" fill="#bdbdbd"/><rect x="49" y="454.2" width="3" height="0.9" fill="#bdbdbd"/><rect x="49" y="459.4" width="3" height="0.9" fill="#bdbdbd"/><rect x="41" y="464.6" width="11" height="0.9" fill="#cfcfcf"/><rect x="49" y="469.8" width="3" height="0.9" fill="#bdbdbd"/><rect x="49" y="475.0" width="3" height="0.9" fill="#bdbdbd"/><rect x="49" y="480.2" width="3" height="0.9" fill="#bdbdbd"/><rect x="49" y="485.4" width="3" height="0.9" fill="#bdbdbd"/><rect x="47" y="490.6" width="5" height="0.9" fill="#bdbdbd"/><rect x="49" y="495.8" width="3" height="0.9" fill="#bdbdbd"/><rect x="49" y="501.0" width="3" height="0.9" fill="#bdbdbd"/><rect x="49" y="506.2" width="3" height="0.9" fill="#bdbdbd"/><text transform="translate(46.6,102.6) rotate(-90)" text-anchor="end" font-size="7.8" fill="#e6e6e6" font-family="Liberation Sans">0</text><text transform="translate(46.6,154.6) rotate(-90)" text-anchor="end" font-size="7.8" fill="#e6e6e6" font-family="Liberation Sans">100</text><text transform="translate(46.6,206.6) rotate(-90)" text-anchor="end" font-size="7.8" fill="#e6e6e6" font-family="Liberation Sans">200</text><text transform="translate(46.6,258.6) rotate(-90)" text-anchor="end" font-size="7.8" fill="#e6e6e6" font-family="Liberation Sans">300</text><text transform="translate(46.6,310.6) rotate(-90)" text-anchor="end" font-size="7.8" fill="#e6e6e6" font-family="Liberation Sans">400</text><text transform="translate(46.6,362.6) rotate(-90)" text-anchor="end" font-size="7.8" fill="#e6e6e6" font-family="Liberation Sans">500</text><text transform="translate(46.6,414.6) rotate(-90)" text-anchor="end" font-size="7.8" fill="#e6e6e6" font-family="Liberation Sans">600</text><text transform="translate(46.6,466.6) rotate(-90)" text-anchor="end" font-size="7.8" fill="#e6e6e6" font-family="Liberation Sans">700</text><path d="M470.5 85.5 L474 85.5 L472.2 88.5 Z" fill="#eee"/><path d="M49 271.5 L52 273 L49 274.5 Z" fill="#eee"/><g transform="translate(15.2,9.9)" fill="none" stroke="#e4e4e4" stroke-width="1.1"><circle r="3.9" stroke-width="1.2"/><circle r="1.7" stroke-width="1.1"/><line x1="3.88" y1="1.61" x2="5.08" y2="2.10" stroke-width="1.5"/><line x1="1.61" y1="3.88" x2="2.10" y2="5.08" stroke-width="1.5"/><line x1="-1.61" y1="3.88" x2="-2.10" y2="5.08" stroke-width="1.5"/><line x1="-3.88" y1="1.61" x2="-5.08" y2="2.10" stroke-width="1.5"/><line x1="-3.88" y1="-1.61" x2="-5.08" y2="-2.10" stroke-width="1.5"/><line x1="-1.61" y1="-3.88" x2="-2.10" y2="-5.08" stroke-width="1.5"/><line x1="1.61" y1="-3.88" x2="2.10" y2="-5.08" stroke-width="1.5"/><line x1="3.88" y1="-1.61" x2="5.08" y2="-2.10" stroke-width="1.5"/></g><g transform="translate(46.9,9.9)" fill="none" stroke="#a6a6d6" stroke-width="1.1"><path d="M-3 -3.2 A4.6 4.6 0 1 0 3 -3.2" stroke-width="1.6"/><line x1="0" y1="-5.4" x2="0" y2="0" stroke-width="1.6"/></g><g transform="translate(74.4,9.6)" fill="none" stroke="#e8e8e8" stroke-width="1.1"><rect x="-4.3" y="-4.3" width="8.6" height="8.6" rx="1" stroke-width="1.2"/><rect x="-2.2" y="-2.2" width="4.4" height="4.4" stroke-width="1.1"/><line x1="-2.2" y1="-5.8" x2="-2.2" y2="-4.3" stroke-width="0.8"/><line x1="-2.2" y1="4.3" x2="-2.2" y2="5.8" stroke-width="0.8"/><line x1="-5.8" y1="-2.2" x2="-4.3" y2="-2.2" stroke-width="0.8"/><line x1="4.3" y1="-2.2" x2="5.8" y2="-2.2" stroke-width="0.8"/><line x1="0" y1="-5.8" x2="0" y2="-4.3" stroke-width="0.8"/><line x1="0" y1="4.3" x2="0" y2="5.8" stroke-width="0.8"/><line x1="-5.8" y1="0" x2="-4.3" y2="0" stroke-width="0.8"/><line x1="4.3" y1="0" x2="5.8" y2="0" stroke-width="0.8"/><line x1="2.2" y1="-5.8" x2="2.2" y2="-4.3" stroke-width="0.8"/><line x1="2.2" y1="4.3" x2="2.2" y2="5.8" stroke-width="0.8"/><line x1="-5.8" y1="2.2" x2="-4.3" y2="2.2" stroke-width="0.8"/><line x1="4.3" y1="2.2" x2="5.8" y2="2.2" stroke-width="0.8"/></g><g transform="translate(97.6,9.6)" fill="none" stroke="#e8e8e8" stroke-width="1.1"><rect x="-4.3" y="-4.3" width="8.6" height="8.6" rx="1" stroke-width="1.2"/><rect x="-2.2" y="-2.2" width="4.4" height="4.4" stroke-width="1.1"/><line x1="-2.2" y1="-5.8" x2="-2.2" y2="-4.3" stroke-width="0.8"/><line x1="-2.2" y1="4.3" x2="-2.2" y2="5.8" stroke-width="0.8"/><line x1="-5.8" y1="-2.2" x2="-4.3" y2="-2.2" stroke-width="0.8"/><line x1="4.3" y1="-2.2" x2="5.8" y2="-2.2" stroke-width="0.8"/><line x1="0" y1="-5.8" x2="0" y2="-4.3" stroke-width="0.8"/><line x1="0" y1="4.3" x2="0" y2="5.8" stroke-width="0.8"/><line x1="-5.8" y1="0" x2="-4.3" y2="0" stroke-width="0.8"/><line x1="4.3" y1="0" x2="5.8" y2="0" stroke-width="0.8"/><line x1="2.2" y1="-5.8" x2="2.2" y2="-4.3" stroke-width="0.8"/><line x1="2.2" y1="4.3" x2="2.2" y2="5.8" stroke-width="0.8"/><line x1="-5.8" y1="2.2" x2="-4.3" y2="2.2" stroke-width="0.8"/><line x1="4.3" y1="2.2" x2="5.8" y2="2.2" stroke-width="0.8"/></g><g transform="translate(120.8,9.6)" fill="none" stroke="#e8e8e8" stroke-width="1.1"><rect x="-4.3" y="-4.3" width="8.6" height="8.6" rx="1" stroke-width="1.2"/><rect x="-2.2" y="-2.2" width="4.4" height="4.4" stroke-width="1.1"/><line x1="-2.2" y1="-5.8" x2="-2.2" y2="-4.3" stroke-width="0.8"/><line x1="-2.2" y1="4.3" x2="-2.2" y2="5.8" stroke-width="0.8"/><line x1="-5.8" y1="-2.2" x2="-4.3" y2="-2.2" stroke-width="0.8"/><line x1="4.3" y1="-2.2" x2="5.8" y2="-2.2" stroke-width="0.8"/><line x1="0" y1="-5.8" x2="0" y2="-4.3" stroke-width="0.8"/><line x1="0" y1="4.3" x2="0" y2="5.8" stroke-width="0.8"/><line x1="-5.8" y1="0" x2="-4.3" y2="0" stroke-width="0.8"/><line x1="4.3" y1="0" x2="5.8" y2="0" stroke-width="0.8"/><line x1="2.2" y1="-5.8" x2="2.2" y2="-4.3" stroke-width="0.8"/><line x1="2.2" y1="4.3" x2="2.2" y2="5.8" stroke-width="0.8"/><line x1="-5.8" y1="2.2" x2="-4.3" y2="2.2" stroke-width="0.8"/><line x1="4.3" y1="2.2" x2="5.8" y2="2.2" stroke-width="0.8"/></g><g transform="translate(144.5,9.6)" fill="none" stroke="#e8e8e8" stroke-width="1.1"><rect x="-4.3" y="-4.3" width="8.6" height="8.6" rx="1" stroke-width="1.2"/><rect x="-2.2" y="-2.2" width="4.4" height="4.4" stroke-width="1.1"/><line x1="-2.2" y1="-5.8" x2="-2.2" y2="-4.3" stroke-width="0.8"/><line x1="-2.2" y1="4.3" x2="-2.2" y2="5.8" stroke-width="0.8"/><line x1="-5.8" y1="-2.2" x2="-4.3" y2="-2.2" stroke-width="0.8"/><line x1="4.3" y1="-2.2" x2="5.8" y2="-2.2" stroke-width="0.8"/><line x1="0" y1="-5.8" x2="0" y2="-4.3" stroke-width="0.8"/><line x1="0" y1="4.3" x2="0" y2="5.8" stroke-width="0.8"/><line x1="-5.8" y1="0" x2="-4.3" y2="0" stroke-width="0.8"/><line x1="4.3" y1="0" x2="5.8" y2="0" stroke-width="0.8"/><line x1="2.2" y1="-5.8" x2="2.2" y2="-4.3" stroke-width="0.8"/><line x1="2.2" y1="4.3" x2="2.2" y2="5.8" stroke-width="0.8"/><line x1="-5.8" y1="2.2" x2="-4.3" y2="2.2" stroke-width="0.8"/><line x1="4.3" y1="2.2" x2="5.8" y2="2.2" stroke-width="0.8"/></g><rect x="68" y="16.6" width="12.8" height="3.3" rx="1.6" fill="#f4f4f4"/><g transform="translate(761.6,9.6)" fill="none" stroke="#e8e8e8" stroke-width="1.1"><rect x="-4.3" y="-4.3" width="8.6" height="8.6" rx="1" stroke-width="1.2"/><rect x="-2.2" y="-2.2" width="4.4" height="4.4" stroke-width="1.1"/><line x1="-2.2" y1="-5.8" x2="-2.2" y2="-4.3" stroke-width="0.8"/><line x1="-2.2" y1="4.3" x2="-2.2" y2="5.8" stroke-width="0.8"/><line x1="-5.8" y1="-2.2" x2="-4.3" y2="-2.2" stroke-width="0.8"/><line x1="4.3" y1="-2.2" x2="5.8" y2="-2.2" stroke-width="0.8"/><line x1="0" y1="-5.8" x2="0" y2="-4.3" stroke-width="0.8"/><line x1="0" y1="4.3" x2="0" y2="5.8" stroke-width="0.8"/><line x1="-5.8" y1="0" x2="-4.3" y2="0" stroke-width="0.8"/><line x1="4.3" y1="0" x2="5.8" y2="0" stroke-width="0.8"/><line x1="2.2" y1="-5.8" x2="2.2" y2="-4.3" stroke-width="0.8"/><line x1="2.2" y1="4.3" x2="2.2" y2="5.8" stroke-width="0.8"/><line x1="-5.8" y1="2.2" x2="-4.3" y2="2.2" stroke-width="0.8"/><line x1="4.3" y1="2.2" x2="5.8" y2="2.2" stroke-width="0.8"/></g><g transform="translate(785,9.6)" fill="none" stroke="#e8e8e8" stroke-width="1.1"><rect x="-4.3" y="-4.3" width="8.6" height="8.6" rx="1" stroke-width="1.2"/><rect x="-2.2" y="-2.2" width="4.4" height="4.4" stroke-width="1.1"/><line x1="-2.2" y1="-5.8" x2="-2.2" y2="-4.3" stroke-width="0.8"/><line x1="-2.2" y1="4.3" x2="-2.2" y2="5.8" stroke-width="0.8"/><line x1="-5.8" y1="-2.2" x2="-4.3" y2="-2.2" stroke-width="0.8"/><line x1="4.3" y1="-2.2" x2="5.8" y2="-2.2" stroke-width="0.8"/><line x1="0" y1="-5.8" x2="0" y2="-4.3" stroke-width="0.8"/><line x1="0" y1="4.3" x2="0" y2="5.8" stroke-width="0.8"/><line x1="-5.8" y1="0" x2="-4.3" y2="0" stroke-width="0.8"/><line x1="4.3" y1="0" x2="5.8" y2="0" stroke-width="0.8"/><line x1="2.2" y1="-5.8" x2="2.2" y2="-4.3" stroke-width="0.8"/><line x1="2.2" y1="4.3" x2="2.2" y2="5.8" stroke-width="0.8"/><line x1="-5.8" y1="2.2" x2="-4.3" y2="2.2" stroke-width="0.8"/><line x1="4.3" y1="2.2" x2="5.8" y2="2.2" stroke-width="0.8"/></g><g transform="translate(807.9,9.6)" fill="none" stroke="#e8e8e8" stroke-width="1.1"><rect x="-4.3" y="-4.3" width="8.6" height="8.6" rx="1" stroke-width="1.2"/><rect x="-2.2" y="-2.2" width="4.4" height="4.4" stroke-width="1.1"/><line x1="-2.2" y1="-5.8" x2="-2.2" y2="-4.3" stroke-width="0.8"/><line x1="-2.2" y1="4.3" x2="-2.2" y2="5.8" stroke-width="0.8"/><line x1="-5.8" y1="-2.2" x2="-4.3" y2="-2.2" stroke-width="0.8"/><line x1="4.3" y1="-2.2" x2="5.8" y2="-2.2" stroke-width="0.8"/><line x1="0" y1="-5.8" x2="0" y2="-4.3" stroke-width="0.8"/><line x1="0" y1="4.3" x2="0" y2="5.8" stroke-width="0.8"/><line x1="-5.8" y1="0" x2="-4.3" y2="0" stroke-width="0.8"/><line x1="4.3" y1="0" x2="5.8" y2="0" stroke-width="0.8"/><line x1="2.2" y1="-5.8" x2="2.2" y2="-4.3" stroke-width="0.8"/><line x1="2.2" y1="4.3" x2="2.2" y2="5.8" stroke-width="0.8"/><line x1="-5.8" y1="2.2" x2="-4.3" y2="2.2" stroke-width="0.8"/><line x1="4.3" y1="2.2" x2="5.8" y2="2.2" stroke-width="0.8"/></g><g transform="translate(831.5,9.6)" fill="none" stroke="#e8e8e8" stroke-width="1.1"><rect x="-4.3" y="-4.3" width="8.6" height="8.6" rx="1" stroke-width="1.2"/><rect x="-2.2" y="-2.2" width="4.4" height="4.4" stroke-width="1.1"/><line x1="-2.2" y1="-5.8" x2="-2.2" y2="-4.3" stroke-width="0.8"/><line x1="-2.2" y1="4.3" x2="-2.2" y2="5.8" stroke-width="0.8"/><line x1="-5.8" y1="-2.2" x2="-4.3" y2="-2.2" stroke-width="0.8"/><line x1="4.3" y1="-2.2" x2="5.8" y2="-2.2" stroke-width="0.8"/><line x1="0" y1="-5.8" x2="0" y2="-4.3" stroke-width="0.8"/><line x1="0" y1="4.3" x2="0" y2="5.8" stroke-width="0.8"/><line x1="-5.8" y1="0" x2="-4.3" y2="0" stroke-width="0.8"/><line x1="4.3" y1="0" x2="5.8" y2="0" stroke-width="0.8"/><line x1="2.2" y1="-5.8" x2="2.2" y2="-4.3" stroke-width="0.8"/><line x1="2.2" y1="4.3" x2="2.2" y2="5.8" stroke-width="0.8"/><line x1="-5.8" y1="2.2" x2="-4.3" y2="2.2" stroke-width="0.8"/><line x1="4.3" y1="2.2" x2="5.8" y2="2.2" stroke-width="0.8"/></g><g transform="translate(855,9.6)" fill="none" stroke="#e8e8e8" stroke-width="1.1"><rect x="-4.3" y="-4.3" width="8.6" height="8.6" rx="1" stroke-width="1.2"/><rect x="-2.2" y="-2.2" width="4.4" height="4.4" stroke-width="1.1"/><line x1="-2.2" y1="-5.8" x2="-2.2" y2="-4.3" stroke-width="0.8"/><line x1="-2.2" y1="4.3" x2="-2.2" y2="5.8" stroke-width="0.8"/><line x1="-5.8" y1="-2.2" x2="-4.3" y2="-2.2" stroke-width="0.8"/><line x1="4.3" y1="-2.2" x2="5.8" y2="-2.2" stroke-width="0.8"/><line x1="0" y1="-5.8" x2="0" y2="-4.3" stroke-width="0.8"/><line x1="0" y1="4.3" x2="0" y2="5.8" stroke-width="0.8"/><line x1="-5.8" y1="0" x2="-4.3" y2="0" stroke-width="0.8"/><line x1="4.3" y1="0" x2="5.8" y2="0" stroke-width="0.8"/><line x1="2.2" y1="-5.8" x2="2.2" y2="-4.3" stroke-width="0.8"/><line x1="2.2" y1="4.3" x2="2.2" y2="5.8" stroke-width="0.8"/><line x1="-5.8" y1="2.2" x2="-4.3" y2="2.2" stroke-width="0.8"/><line x1="4.3" y1="2.2" x2="5.8" y2="2.2" stroke-width="0.8"/></g><g transform="translate(878,9.6)" fill="none" stroke="#e8e8e8" stroke-width="1.1"><rect x="-4.3" y="-4.3" width="8.6" height="8.6" rx="1" stroke-width="1.2"/><rect x="-2.2" y="-2.2" width="4.4" height="4.4" stroke-width="1.1"/><line x1="-2.2" y1="-5.8" x2="-2.2" y2="-4.3" stroke-width="0.8"/><line x1="-2.2" y1="4.3" x2="-2.2" y2="5.8" stroke-width="0.8"/><line x1="-5.8" y1="-2.2" x2="-4.3" y2="-2.2" stroke-width="0.8"/><line x1="4.3" y1="-2.2" x2="5.8" y2="-2.2" stroke-width="0.8"/><line x1="0" y1="-5.8" x2="0" y2="-4.3" stroke-width="0.8"/><line x1="0" y1="4.3" x2="0" y2="5.8" stroke-width="0.8"/><line x1="-5.8" y1="0" x2="-4.3" y2="0" stroke-width="0.8"/><line x1="4.3" y1="0" x2="5.8" y2="0" stroke-width="0.8"/><line x1="2.2" y1="-5.8" x2="2.2" y2="-4.3" stroke-width="0.8"/><line x1="2.2" y1="4.3" x2="2.2" y2="5.8" stroke-width="0.8"/><line x1="-5.8" y1="2.2" x2="-4.3" y2="2.2" stroke-width="0.8"/><line x1="4.3" y1="2.2" x2="5.8" y2="2.2" stroke-width="0.8"/></g><g transform="translate(901.5,9.6)" fill="none" stroke="#e8e8e8" stroke-width="1.1"><rect x="-4.3" y="-4.3" width="8.6" height="8.6" rx="1" stroke-width="1.2"/><rect x="-2.2" y="-2.2" width="4.4" height="4.4" stroke-width="1.1"/><line x1="-2.2" y1="-5.8" x2="-2.2" y2="-4.3" stroke-width="0.8"/><line x1="-2.2" y1="4.3" x2="-2.2" y2="5.8" stroke-width="0.8"/><line x1="-5.8" y1="-2.2" x2="-4.3" y2="-2.2" stroke-width="0.8"/><line x1="4.3" y1="-2.2" x2="5.8" y2="-2.2" stroke-width="0.8"/><line x1="0" y1="-5.8" x2="0" y2="-4.3" stroke-width="0.8"/><line x1="0" y1="4.3" x2="0" y2="5.8" stroke-width="0.8"/><line x1="-5.8" y1="0" x2="-4.3" y2="0" stroke-width="0.8"/><line x1="4.3" y1="0" x2="5.8" y2="0" stroke-width="0.8"/><line x1="2.2" y1="-5.8" x2="2.2" y2="-4.3" stroke-width="0.8"/><line x1="2.2" y1="4.3" x2="2.2" y2="5.8" stroke-width="0.8"/><line x1="-5.8" y1="2.2" x2="-4.3" y2="2.2" stroke-width="0.8"/><line x1="4.3" y1="2.2" x2="5.8" y2="2.2" stroke-width="0.8"/></g><g transform="translate(988.6,9)" fill="none" stroke="#e0e0e0" stroke-width="1.1"><path d="M-4 3 L-3.2 1.8 L-3.2 -1 A3.2 3.6 0 0 1 3.2 -1 L3.2 1.8 L4 3 Z" stroke-width="1.2"/><path d="M-1.2 4.6 L1.2 4.6" stroke-width="1.2"/></g><rect x="318" y="5.2" width="364" height="1.6" fill="#cfd0e6"/><rect x="333" y="6.6" width="6" height="1.2" fill="#a9aac4"/><rect x="349" y="6.6" width="14" height="1.2" fill="#a9aac4"/><rect x="366" y="6.6" width="18" height="1.2" fill="#a9aac4"/><rect x="376" y="6.6" width="5" height="1.2" fill="#a9aac4"/><rect x="402" y="6.6" width="4" height="1.2" fill="#a9aac4"/><rect x="414" y="6.6" width="8" height="1.2" fill="#a9aac4"/><rect x="459" y="6.6" width="6" height="1.2" fill="#a9aac4"/><rect x="474" y="6.6" width="6" height="1.2" fill="#a9aac4"/><rect x="487" y="6.6" width="3" height="1.2" fill="#a9aac4"/><rect x="499" y="6.6" width="4" height="1.2" fill="#a9aac4"/><rect x="514" y="6.6" width="4" height="1.2" fill="#a9aac4"/><rect x="561" y="6.6" width="5" height="1.2" fill="#a9aac4"/><rect x="652" y="6.6" width="4" height="1.2" fill="#a9aac4"/><g transform="translate(28.2,62)" fill="none" stroke="#e8e8e8" stroke-width="1.1"><rect x="-3.8" y="-3.8" width="7.6" height="7.6" stroke-width="1"/><circle cx="1" cy="-0.8" r="2" fill="#eee" stroke="none"/><rect x="-3" y="1.6" width="4" height="1.8" fill="#eee" stroke="none"/></g><g transform="translate(49.2,62)" fill="none" stroke="#d8d8d8" stroke-width="1.1"><rect x="-3.8" y="-4.2" width="7.6" height="8.4" rx="0.8" stroke-width="0.8" stroke="#9a9a9a"/><path d="M-2.2 -2.2 H2.2 M-2.2 0 H2.2 M-2.2 2.2 H2.2" stroke-width="1" stroke="#f0f0f0"/></g><g transform="translate(71,62)" fill="none" stroke="#6a6a6a" stroke-width="1.1"><circle cx="0" cy="-0.5" r="2" fill="#6a6a6a" stroke="none"/><path d="M-3 3 H3" stroke-width="0.8"/></g><g transform="translate(92,62)" fill="none" stroke="#cfcfcf" stroke-width="1.1"><rect x="-3.5" y="-2.5" width="6" height="6" stroke-width="1" stroke-dasharray="2 1"/><rect x="1" y="-4.5" width="3.5" height="3.5" fill="#eee" stroke="none"/></g><g transform="translate(116.4,62)" fill="none" stroke="#8c8c8c" stroke-width="1.1"><path d="M-3 2 V-1 A3 3 0 0 1 3 -3" stroke-width="1"/><rect x="-3.5" y="2" width="7" height="2" fill="#9a9a9a" stroke="none"/></g><g transform="translate(137.4,62)" fill="none" stroke="#8c8c8c" stroke-width="1.1"><path d="M-3 -3 A3 3 0 0 1 3 -1 V2" stroke-width="1"/><rect x="-3.5" y="2" width="7" height="2" fill="#9a9a9a" stroke="none"/></g><g transform="translate(159.2,62)" fill="none" stroke="#8c8c8c" stroke-width="1.1"><path d="M-0.3 -4 L-4 3 H-0.3 Z" fill="#8a8a8a" stroke="none"/><path d="M0.6 -4 L4 3 H0.6 Z" fill="#6a6a6a" stroke="none"/></g><g transform="translate(180.2,62)" fill="none" stroke="#8c8c8c" stroke-width="1.1"><path d="M-4 -3.5 L3 0 L-4 0 Z" fill="#8a8a8a" stroke="none"/><path d="M-4 0.8 L3 0.8 L-4 4 Z" fill="#6a6a6a" stroke="none"/></g><g transform="translate(204.9,62)" fill="none" stroke="#8c8c8c" stroke-width="1.1"><path d="M-4 -4 H4 M-1 -2 V4 M2 -2 V2" stroke-width="1.1"/></g><g transform="translate(225.6,62)" fill="none" stroke="#8c8c8c" stroke-width="1.1"><path d="M-4 -2 H4 M-1 -4 V4 M2 -4 V2" stroke-width="1.1"/></g><g transform="translate(247.4,62)" fill="none" stroke="#8c8c8c" stroke-width="1.1"><path d="M-4 0 H4 M-1 -4 V3 M2 -3 V3" stroke-width="1.1"/></g><g transform="translate(268.4,62)" fill="none" stroke="#8c8c8c" stroke-width="1.1"><path d="M-4 4 H4 M-1 -4 V2 M2 -2 V2" stroke-width="1.1"/></g><g transform="translate(555.8,62)" fill="none" stroke="#f0f0f0" stroke-width="1.1"><rect x="-3.2" y="-0.6" width="5.2" height="4.2" fill="#f0f0f0" stroke="none"/><path d="M0.4 -0.6 V-2.2 A1.7 1.7 0 0 1 3.8 -2.2 V-1.4" stroke-width="1.1"/></g><g transform="translate(683,62.5)" fill="none" stroke="#e0e0e0" stroke-width="1.1"><path d="M-2.2 -1.2 L0 1 L2.2 -1.2" stroke-width="1.2"/></g><g transform="translate(706.8,62)" fill="none" stroke="#d8d8d8" stroke-width="1.1"><path d="M-4 -3 H3 V1 M-4 -0.5 H1 M-4 2 H1" stroke-width="1"/><path d="M2 2 L4 3.2 L2 4.4 Z" fill="#e0e0e0" stroke="none"/></g><g transform="translate(728.4,62)" fill="none" stroke="#d8d8d8" stroke-width="1.1"><path d="M-4 -3 H3 V1 M-4 -0.5 H1 M-4 2 H1" stroke-width="1"/><path d="M2 2 L4 3.2 L2 4.4 Z" fill="#e0e0e0" stroke="none"/></g><g transform="translate(749.4,62)" fill="none" stroke="#d8d8d8" stroke-width="1.1"><path d="M-4 -3 H3 V1 M-4 -0.5 H1 M-4 2 H1" stroke-width="1"/><path d="M2 2 L4 3.2 L2 4.4 Z" fill="#e0e0e0" stroke="none"/></g><g transform="translate(771.2,62)" fill="none" stroke="#d8d8d8" stroke-width="1.1"><path d="M-4 -3 H3 V1 M-4 -0.5 H1 M-4 2 H1" stroke-width="1"/><path d="M2 2 L4 3.2 L2 4.4 Z" fill="#e0e0e0" stroke="none"/></g><g transform="translate(949.2,62)" fill="none" stroke="#eeeeee" stroke-width="1.1"><path d="M-1.5 -3.8 A4 4 0 1 1 -3.8 1.2" stroke-width="1.7"/><rect x="-5" y="-2.2" width="2" height="2" fill="#eee" stroke="none"/></g><rect x="962" y="54.3" width="17" height="16" rx="2" fill="#303030" stroke="#272727" stroke-width="0.8"/><g transform="translate(970.5,62.3)" fill="none" stroke="#e8e8e8" stroke-width="1.1"><path d="M1.2 -2.5 L-1.3 0 L1.2 2.5" stroke-width="1.3"/></g><g transform="translate(45.6,79.6)" fill="none" stroke="#f0f0f0" stroke-width="1.1"><rect x="-3.2" y="-0.6" width="5.2" height="4.2" fill="#f0f0f0" stroke="none"/><path d="M0.4 -0.6 V-2.2 A1.7 1.7 0 0 1 3.8 -2.2 V-1.4" stroke-width="1.1"/></g><g transform="translate(23.7,81)" fill="none" stroke="#c6d8f4" stroke-width="1.1"><path d="M-3 -4.2 L3.8 1.2 L0.6 1.4 L2.2 4.4 L0.9 5 L-0.6 2 L-3 4 Z" stroke-width="1.1" fill="none"/></g><g transform="translate(23.7,98)" fill="none" stroke="#dddddd" stroke-width="1.1"><rect x="-4" y="-3.5" width="4" height="4" fill="#ddd" stroke="none"/><path d="M1.2 1.5 L4.2 3.2 L1.2 4.9 Z" fill="#eee" stroke="none"/></g><g transform="translate(23.7,114)" fill="none" stroke="#e8e8e8" stroke-width="1.1"><circle cx="-1" cy="-1.2" r="2.8" stroke-width="1.2"/><rect x="0.2" y="0" width="3.5" height="3.5" stroke-width="1.2"/></g><g transform="translate(23.7,132)" fill="none" stroke="#b4a6e6" stroke-width="1.1"><rect x="-3.5" y="-3.5" width="7" height="7" fill="#b4a6e6" stroke="#d8d0f4" stroke-width="0.8"/></g><g transform="translate(23.7,149)" fill="none" stroke="#b4a6e6" stroke-width="1.1"><circle r="3.7" fill="#8e80bb" stroke="#cfc6ee" stroke-width="1"/></g><g transform="translate(23.7,166)" fill="none" stroke="#dedede" stroke-width="1.1"><path d="M-3.5 1 L-1.5 -3.5 L2.5 -2.5 L3.5 1.5 L0 3.8 Z" stroke-width="1.1"/><circle cx="0" cy="0" r="1" fill="#ddd" stroke="none"/></g><g transform="translate(23.7,183)" fill="none" stroke="#e8e8e8" stroke-width="1.1"><path d="M0 -4 L3.6 -2 V2.2 L0 4.2 L-3.6 2.2 V-2 Z" fill="#d8d0f0" stroke="#eee" stroke-width="0.9"/><path d="M-3.6 -2 L0 0 L3.6 -2 M0 0 V4.2" stroke="#555" stroke-width="0.8"/></g><g transform="translate(23.7,199)" fill="none" stroke="#dedede" stroke-width="1.1"><path d="M0.5 0 A1.2 1.2 0 0 1 -1.8 0 A2.4 2.4 0 0 1 3 0 A3.6 3.6 0 0 1 -4 0" stroke-width="1.1"/></g><g transform="translate(23.7,216)" fill="none" stroke="#e8e8e8" stroke-width="1.1"><path d="M-3.8 -3.8 V-0.8 M-4 -2.2 H-2.5 M-2.5 3.5 L3.5 -2.5 L4 -1 L-1 4 Z" stroke-width="1" /><circle cx="-3.4" cy="3.4" r="0.9" fill="#9be07a" stroke="none"/></g><g transform="translate(23.7,233)" fill="none" stroke="#e0e0e0" stroke-width="1.1"><path d="M-4 4 L3 -3 M-2 4.2 L4 -1.8" stroke-width="1.3"/><circle cx="-3" cy="-3" r="0.8" fill="#cbb" stroke="none"/></g><g transform="translate(23.7,250)" fill="none" stroke="#d0d0d0" stroke-width="1.1"><path d="M-3.8 3.8 L3.8 -3.8" stroke-width="1.6"/><path d="M-2 4 L1 1" stroke-width="0.8"/></g><g transform="translate(23.7,267)" fill="none" stroke="#eeeeee" stroke-width="1.1"><path d="M-4.2 4.2 L-1.3 -3.8 L1.6 4.2 M-3.1 1.5 H0.5" stroke-width="1.5"/><path d="M3.6 -4 V4.2" stroke="#a6c48e" stroke-width="1"/></g><g transform="translate(23.7,285)" fill="none" stroke="#ddd" stroke-width="1.1"><rect x="-4" y="-4" width="8" height="8" fill="#e6a6b6" stroke="#bbb" stroke-width="0.8"/><path d="M-4 0 H4 M0 -4 V4" stroke="#d08898" stroke-width="0.6"/></g><g transform="translate(23.7,301)" fill="none" stroke="#ddd" stroke-width="1.1"><rect x="-4" y="-4" width="8" height="8" fill="#503040" stroke="#c9b6c0" stroke-width="0.8"/><path d="M-2.5 -2 H0 V2 H2.8 M0 -2.5 H2.5 M-2.5 2.5 H0" stroke="#ff8ab0" stroke-width="1.2"/></g><g transform="translate(23.7,318)" fill="none" stroke="#eeeeee" stroke-width="1.1"><path d="M-3.5 3.5 L2.5 -2.5" stroke-width="2.2"/><circle cx="-3.5" cy="-2.5" r="1.2" fill="#e86090" stroke="none"/></g><g transform="translate(23.7,337)" fill="none" stroke="#eeeeee" stroke-width="1.1"><path d="M-2 2 L3 -3" stroke-width="2.6"/><circle cx="-3" cy="2.8" r="1.6" fill="#b04070" stroke="none"/></g><g transform="translate(23.7,354)" fill="none" stroke="#eeeeee" stroke-width="1.1"><path d="M-4 3 H4 V1 C2 -3 -1 -3 -3 0 Z" fill="#eee" stroke="none"/><path d="M-1 -2 L3 -4" stroke-width="0.8"/></g><g transform="translate(23.7,370)" fill="none" stroke="#eeeeee" stroke-width="1.1"><rect x="-3" y="0" width="6" height="4" fill="#eee" stroke="none"/><path d="M-2 0 V-2 A2 2 0 0 1 2 -2 V0" stroke-width="1"/><circle cx="-4" cy="-3" r="0.8" fill="#eee" stroke="none"/></g><g transform="translate(23.7,387)" fill="none" stroke="#eeeeee" stroke-width="1.1"><path d="M-3.5 2.5 L1 -2 L3.5 0.5 L-1 5 Z" fill="#eee" stroke="none"/><path d="M-4.5 4.5 H4" stroke-width="0.8"/></g><g transform="translate(23.7,403)" fill="none" stroke="#e0e0e0" stroke-width="1.1"><path d="M-4 -3.5 C-1 -4 0 -1 0 0 C0 2 1 3.8 4 3.5" stroke-width="1.4"/><rect x="2.6" y="2.2" width="2.4" height="2.4" fill="#eee" stroke="none"/></g><g transform="translate(23.7,421)" fill="none" stroke="#e6e6e6" stroke-width="1.1"><path d="M-3.6 4 L0 -4 L3.6 4 M-2.2 0.8 H2.2" stroke-width="1.3"/></g><g transform="translate(23.7,438)" fill="none" stroke="#e6e6e6" stroke-width="1.1"><rect x="-3.3" y="-4" width="6.6" height="8" rx="1" stroke-width="1.2"/><path d="M-1.5 -1 H1.5 M-1.5 1.2 H1.5" stroke-width="0.9"/></g><g transform="translate(23.7,455)" fill="none" stroke="#e6e6e6" stroke-width="1.1"><circle cx="-0.8" cy="-0.8" r="3" stroke-width="1.4"/><path d="M1.4 1.4 L4 4" stroke-width="1.6"/></g><g transform="translate(23.7,472)" fill="none" stroke="#e6e6e6" stroke-width="1.1"><rect x="-4" y="-1.5" width="5.5" height="5.5" stroke-width="1.2"/><path d="M-1.5 -1.5 V-4 H4 V1.5 H1.5" stroke-width="1.2"/></g><rect x="34" y="287.4" width="1.4" height="1.2" fill="#aaa"/><rect x="34" y="289.4" width="1.4" height="1.2" fill="#aaa"/><rect x="34" y="291.4" width="1.4" height="1.2" fill="#aaa"/><rect x="606.2" y="286.4" width="1.3" height="1.2" fill="#bbb"/><rect x="606.2" y="288.4" width="1.3" height="1.2" fill="#bbb"/><rect x="606.2" y="290.4" width="1.3" height="1.2" fill="#bbb"/><g transform="translate(624.4,85)" fill="none" stroke="#f0f0f0" stroke-width="1.1"><path d="M-2.5 -2.8 H2.5 M-3.5 2.8 H3.5" stroke-width="1.2"/><path d="M-3 0 H3" stroke="#d58a9a" stroke-width="1.2"/><path d="M-3 -1.4 L3 -1.4" stroke="#6a4a55" stroke-width="0.6"/></g><g transform="translate(657.8,85)" fill="none" stroke="#e0e0e0" stroke-width="1.1"><path d="M-3.5 3.8 V-3.5 H2" stroke-width="1"/><path d="M-3 3.5 L4 -3.5" stroke-width="1.3"/></g><g transform="translate(691,85)" fill="none" stroke="#e8e8e8" stroke-width="1.1"><path d="M-3.5 -4 H1 L3.5 -1.5 V4 H-3.5 Z" stroke-width="1.1"/><path d="M1 1 H4.5 M3.3 -0.2 L4.5 1 L3.3 2.2" stroke-width="0.9"/></g><g transform="translate(724.3,85)" fill="none" stroke="#e6e6e6" stroke-width="1.1"><path d="M-3.5 -4.5 V4.5" stroke-width="1"/><rect x="-2.5" y="-3" width="5" height="1.8" fill="#e6e6e6" stroke="none"/><rect x="-2.5" y="-0.5" width="3" height="1.8" fill="#e6e6e6" stroke="none"/><rect x="-2.5" y="2" width="4.5" height="1.8" fill="#e6e6e6" stroke="none"/></g><g transform="translate(757.2,85)" fill="none" stroke="#e6e6e6" stroke-width="1.1"><circle cx="-0.6" cy="-0.6" r="3.1" stroke-width="1.3"/><path d="M1.7 1.7 L3.8 3.8" stroke-width="1.4"/></g><g transform="translate(948.4,85)" fill="none" stroke="#9a9a9a" stroke-width="1.1"><path d="M-3 -1.5 L0 1.5 L3 -1.5" stroke-width="1.1"/></g><g transform="translate(616.3,189.5)" fill="none" stroke="#e0e0e0" stroke-width="1.1"><path d="M-1 -2.3 L1.3 0 L-1 2.3" stroke-width="1.2"/></g><g transform="translate(970.7,84.3)" fill="none" stroke="#eeeeee" stroke-width="1.1"><path d="M-3.5 -4 H1 L3.5 -1.5 V4 H-3.5 Z" stroke-width="1.5"/><circle cx="3.8" cy="-4.2" r="1.1" fill="#b8e0a0" stroke="none"/></g><g transform="translate(970.7,103)" fill="none" stroke="#eeeeee" stroke-width="1.1"><path d="M-4.2 -3.8 H-1 L0 -2.6 H4.2 V3.8 H-4.2 Z" fill="#eeeeee" stroke="none"/><path d="M-3.2 -0.8 H3.2 V2.8 H-3.2 Z" fill="#2e2e2e" stroke="none"/></g><g transform="translate(970.7,122)" fill="none" stroke="#eeeeee" stroke-width="1.1"><path d="M0 -4.5 V-0.5 M-1.8 -2.2 L0 -0.3 L1.8 -2.2" stroke-width="1.1"/><rect x="-4" y="1" width="8" height="3.5" fill="#eee" stroke="none"/></g><g transform="translate(970.7,140.4)" fill="none" stroke="#eeeeee" stroke-width="1.1"><rect x="-2.5" y="-4.2" width="5" height="2.2" fill="#eee" stroke="none"/><rect x="-4.2" y="-1.5" width="8.4" height="4" fill="#eee" stroke="none"/><rect x="-2.5" y="1.8" width="5" height="2.6" fill="#2e2e2e" stroke="#eee" stroke-width="1"/></g><g transform="translate(970.7,162.4)" fill="none" stroke="#eeeeee" stroke-width="1.1"><path d="M-3 -2.5 V-4 H1.5 L3.5 -2 V4 H-3 V2.5" stroke-width="1.1"/><path d="M-4.5 0 H1 M-0.5 -1.5 L1 0 L-0.5 1.5" stroke-width="1"/></g><g transform="translate(970.7,182)" fill="none" stroke="#eeeeee" stroke-width="1.1"><path d="M-3.5 -4 H1 L3.5 -1.5 V4 H-3.5 Z" stroke-width="1.1"/><path d="M0.5 1 H4.5 M3.3 -0.2 L4.5 1 L3.3 2.2" stroke-width="1"/></g><g transform="translate(970.7,202.7)" fill="none" stroke="#eeeeee" stroke-width="1.1"><path d="M-2.5 -3.5 L-4 -2 L-2.5 -0.5 M-4 -2 H1.5 A2.5 2.5 0 0 1 1.5 3.5 H-2" stroke-width="1.2"/></g><g transform="translate(970.7,222.3)" fill="none" stroke="#6e6e6e" stroke-width="1.1"><path d="M2.5 -3.5 L4 -2 L2.5 -0.5 M4 -2 H-1.5 A2.5 2.5 0 0 0 -1.5 3.5 H2" stroke-width="1.1"/></g><g transform="translate(970.7,244.3)" fill="none" stroke="#eeeeee" stroke-width="1.1"><rect x="-4" y="-4" width="5.5" height="5.5" fill="#eee" stroke="none"/><rect x="-1.5" y="-1.5" width="5.5" height="5.5" fill="#2e2e2e" stroke="#eee" stroke-width="1.2"/></g><g transform="translate(970.7,263.9)" fill="none" stroke="#eeeeee" stroke-width="1.1"><circle cx="-2.3" cy="2.6" r="1.6" stroke-width="1.1"/><circle cx="2.3" cy="2.6" r="1.6" stroke-width="1.1"/><path d="M-1.3 1.3 L2.8 -4.5 M1.3 1.3 L-2.8 -4.5" stroke-width="1.1"/></g><g transform="translate(970.7,282.4)" fill="none" stroke="#eeeeee" stroke-width="1.1"><rect x="-3.5" y="-3.5" width="7" height="8" rx="0.8" stroke-width="1.2"/><rect x="-1.5" y="-1.5" width="3" height="4" fill="#eee" stroke="none"/><rect x="-1.5" y="-4.5" width="3" height="1.5" fill="#eee" stroke="none"/></g><rect x="962" y="294" width="17" height="18" rx="2" fill="#2b2b2b" stroke="#262626" stroke-width="0.8"/><g transform="translate(970.5,303.2)" fill="none" stroke="#e8e8e8" stroke-width="1.1"><path d="M-2.5 -1.2 L0 1.3 L2.5 -1.2" stroke-width="1.3"/></g><g transform="translate(204.6,536)" fill="none" stroke="#e0e0e0" stroke-width="1.1"><path d="M-4 0.5 C-2 -3 2 -3 4 0.5 C2 3.5 -2 3.5 -4 0.5 Z" stroke-width="1"/><circle cx="0" cy="0.5" r="1.4" fill="#ddd" stroke="none"/><path d="M-4.5 -1 L-3.5 0 M4.5 -1 L3.5 0" stroke-width="0.8"/></g><g transform="translate(223.8,536.5)" fill="none" stroke="#f0f0f0" stroke-width="1.1"><rect x="-3.2" y="-0.6" width="5.2" height="4.2" fill="#f0f0f0" stroke="none"/><path d="M0.4 -0.6 V-2.2 A1.7 1.7 0 0 1 3.8 -2.2 V-1.4" stroke-width="1.1"/></g><g transform="translate(733.6,536.4)" fill="none" stroke="#6a6a6a" stroke-width="1.1"><path d="M1.2 -3 L-1.5 0 L1.2 3" stroke-width="1"/></g><g transform="translate(753.4,536.6)" fill="none" stroke="#8a8a8a" stroke-width="1.1"><path d="M-2.5 -1.2 L0 1.3 L2.5 -1.2" stroke-width="1.1"/></g><g transform="translate(772,536.4)" fill="none" stroke="#6a6a6a" stroke-width="1.1"><path d="M-1.2 -3 L1.5 0 L-1.2 3" stroke-width="1"/></g><g transform="translate(956,517.5)" fill="none" stroke="#7a7a7a" stroke-width="1.1"><path d="M-3 1.5 L0 -1.5 L3 1.5" stroke-width="1.1"/></g><g transform="translate(966.5,516.5)" fill="none" stroke="#eeeeee" stroke-width="1.1"><path d="M-3 -1.5 L0 1.5 L3 -1.5" stroke-width="1.3"/></g><g transform="translate(977.6,518.5)" fill="none" stroke="#eeeeee" stroke-width="1.1"><path d="M-3.5 -3 H3.5 M-3.5 0 H3.5 M-3.5 3 H3.5" stroke-width="1.3"/></g></svg>
<svg class="o" viewBox="0 0 1000 563"><defs><clipPath id="cv"><rect x="52" y="86" width="552" height="421"/></clipPath></defs><g clip-path="url(#cv)" fill="none" stroke-linecap="round" stroke-linejoin="round"><path d="M402.4 139.2 C403.1 149.3 405.6 184.9 406.6 200.0 C407.6 215.1 408.3 219.3 408.5 230.0 C408.7 240.7 407.9 258.4 407.8 264.1" stroke="#595959" stroke-width="0.75"/><path d="M300.5 249.2 L401.8 249.2" stroke="#595959" stroke-width="0.75"/><path d="M300.5 249.2 L350.0 268.4" stroke="#595959" stroke-width="0.75"/><path d="M401.8 249.2 L451.8 270.5" stroke="#595959" stroke-width="0.75"/><path d="M347.8 270.5 L451.8 270.5" stroke="#595959" stroke-width="0.75"/><path d="M300.5 249.2 L292.6 346.2" stroke="#595959" stroke-width="0.75"/><path d="M348.5 268.0 L341.4 368.2" stroke="#595959" stroke-width="0.75"/><path d="M451.8 270.5 L444.0 366.8" stroke="#595959" stroke-width="0.75"/><path d="M401.8 249.2 L396.0 346.2" stroke="#595959" stroke-width="0.75"/><path d="M292.6 346.2 L394.7 346.2" stroke="#595959" stroke-width="0.75"/><path d="M292.6 348.3 L341.4 366.8" stroke="#595959" stroke-width="0.75"/><path d="M341.4 366.8 L444.0 366.8" stroke="#595959" stroke-width="0.75"/><path d="M391.8 346.2 L444.0 366.8" stroke="#595959" stroke-width="0.75"/><path d="M311.8 379.2 L373.4 377.1" stroke="#595959" stroke-width="0.75"/><path d="M310.4 382.8 L334.5 398.4" stroke="#595959" stroke-width="0.75"/><path d="M334.5 398.4 L396.1 396.3" stroke="#595959" stroke-width="0.75"/><path d="M373.4 377.1 L396.1 396.3" stroke="#595959" stroke-width="0.75"/><path d="M331.7 399.1 C330.3 402.8 326.5 412.6 323.2 421.1 C319.9 429.6 313.7 445.2 311.8 450.0" stroke="#595959" stroke-width="0.75"/><path d="M396.1 396.3 C392.6 405.2 382.4 431.6 374.8 450.0 C367.2 468.4 354.6 497.2 350.6 506.7" stroke="#595959" stroke-width="0.75"/><path d="M377.6 370.0 C371.7 383.3 349.2 433.6 342.1 450.0 C335.0 466.4 336.2 465.3 335.0 468.4" stroke="#595959" stroke-width="0.75"/><path d="M379.0 398.4 L378.3 492.5" stroke="#595959" stroke-width="0.75"/><path d="M306.8 400.5 L306.9 499.0" stroke="#595959" stroke-width="0.75"/><path d="M294.8 392.0 C291.5 403.3 280.8 442.1 274.9 459.9 C269.0 477.7 261.8 492.5 259.2 499.0" stroke="#595959" stroke-width="0.75"/><path d="M320.4 430.0 L287.0 506.8" stroke="#595959" stroke-width="0.75"/><path d="M340.0 455.6 L323.3 496.1" stroke="#595959" stroke-width="0.75"/><path d="M353.5 430.0 L335.0 468.4" stroke="#595959" stroke-width="0.75"/><path d="M335.0 356.1 L292.6 346.9" stroke="#595959" stroke-width="0.75"/><path d="M347.8 269.8 C349.7 268.4 354.8 263.8 359.1 261.2 C363.4 258.6 369.1 254.6 373.4 254.1 C377.7 253.6 381.1 256.5 384.7 258.4 C388.2 260.3 392.3 263.1 394.7 265.5 C397.1 267.9 397.8 266.9 398.9 272.6 C399.9 278.4 400.7 288.8 401.0 300.0 C401.3 311.2 400.6 333.3 400.5 340.0" stroke="#595959" stroke-width="0.75"/><path d="M405.7 272.6 C405.2 275.0 403.8 281.6 402.8 286.8 C401.9 292.0 400.5 301.0 400.0 303.9" stroke="#595959" stroke-width="0.75"/><ellipse cx="306" cy="421.8" rx="17.5" ry="3.5" stroke="#5a5a5a" stroke-width="0.75"/><ellipse cx="374" cy="422" rx="17.8" ry="3.5" stroke="#5a5a5a" stroke-width="0.75"/><path d="M322.6 262.0 C324.7 261.4 330.9 259.2 335.3 258.4 C339.7 257.6 343.1 257.8 349.2 257.0 C355.3 256.2 365.0 253.5 371.9 253.4 C378.8 253.3 385.4 255.2 390.4 256.3 C395.4 257.4 397.1 258.4 401.8 259.8 C406.5 261.2 414.1 263.9 418.5 264.8 C422.9 265.8 426.8 265.4 428.4 265.5" stroke="#474747" stroke-width="0.8"/><path d="M281.3 313.5 L292.0 314.2" stroke="#2b2b2b" stroke-width="0.9"/><path d="M331.8 279.7 L322.6 289.7 L307.6 300.3 L314.0 310.0 L310.4 319.2 L317.5 317.8" stroke="#2b2b2b" stroke-width="0.9"/><path d="M314.0 310.0 L317.5 304.3" stroke="#2b2b2b" stroke-width="0.9"/><path d="M328.9 255.3 L314.0 274.0" stroke="#2b2b2b" stroke-width="0.9"/><path d="M292.0 313.0 L289.1 318.5 L279.1 339.8 L296.9 336.2" stroke="#2b2b2b" stroke-width="0.9"/><path d="M262.1 375.7 L265.0 381.4 L269.2 385.6 L274.2 388.5 L278.4 382.8" stroke="#2b2b2b" stroke-width="0.9"/><path d="M267.8 431.1 L273.5 422.6 L281.3 414.0" stroke="#2b2b2b" stroke-width="0.9"/><path d="M319.6 335.5 L327.4 329.8 L333.1 376.7" stroke="#2b2b2b" stroke-width="0.9"/><path d="M292.6 351.8 L298.3 366.8 L301.9 376.7" stroke="#2b2b2b" stroke-width="0.9"/><path d="M299.0 351.8 L299.7 365.3" stroke="#2b2b2b" stroke-width="0.9"/><path d="M297.6 372.8 L303.3 384.2 L306.1 375.7" stroke="#2b2b2b" stroke-width="0.9"/><path d="M289.1 382.8 L290.5 389.2" stroke="#2b2b2b" stroke-width="0.9"/><path d="M337.8 370.0 L352.0 396.3 L349.2 372.8" stroke="#2b2b2b" stroke-width="0.9"/><path d="M278.4 430.0 L276.3 441.4 L271.3 457.0 L274.2 459.9 L283.4 435.7 L284.1 430.0" stroke="#2b2b2b" stroke-width="0.9"/><path d="M359.1 435.7 L360.6 437.1 L364.1 434.3" stroke="#2b2b2b" stroke-width="0.9"/><path d="M384.0 273.3 L378.3 286.8 L370.5 305.7 L375.5 296.8 L386.1 284.0 L391.8 272.6" stroke="#2b2b2b" stroke-width="0.9"/><path d="M387.6 329.8 L388.3 339.8" stroke="#2b2b2b" stroke-width="0.9"/><path d="M410.7 298.0 L402.1 323.4 L408.5 336.9 L411.0 342.6" stroke="#2b2b2b" stroke-width="0.9"/><path d="M410.7 298.0 L413.5 321.3 L411.4 342.6" stroke="#2b2b2b" stroke-width="0.9"/><path d="M414.2 339.1 L417.0 331.3 L424.9 327.0 L435.5 322.7 L432.0 334.1 L425.6 336.9 L414.2 339.1" stroke="#2b2b2b" stroke-width="0.9"/><path d="M396.1 358.2 L406.0 356.1 L408.2 357.5" stroke="#2b2b2b" stroke-width="0.9"/><path d="M427.0 264.1 L436.9 272.6 L444.0 285.4 L448.3 295.3 L444.0 289.7" stroke="#2b2b2b" stroke-width="0.9"/><path d="M411.3 367.1 L417.7 381.3 L424.8 367.1" stroke="#2b2b2b" stroke-width="0.9"/><path d="M422.0 401.2 L414.9 402.6" stroke="#2b2b2b" stroke-width="0.9"/><path d="M425.9 444.2 L413.1 449.2" stroke="#2b2b2b" stroke-width="0.9"/><path d="M425.5 364.3 L428.4 399.1 L439.7 361.4" stroke="#2b2b2b" stroke-width="0.9"/><path d="M375.7 135.7 C371.7 143.1 358.5 168.1 351.8 180.0 C345.1 191.9 339.8 199.4 335.5 207.0 C331.2 214.6 328.6 220.1 326.3 225.5 C324.1 230.9 323.3 233.9 322.0 239.7 C320.7 245.4 319.6 255.0 318.5 260.0 C317.4 265.0 318.1 264.9 315.5 269.8 C312.9 274.8 305.7 284.7 302.7 289.7 C299.7 294.7 301.2 296.0 297.6 300.0 C294.0 304.0 284.0 311.2 281.3 313.5" stroke="#2b2b2b" stroke-width="0.9"/><path d="M375.7 135.7 C372.4 143.1 361.6 168.3 356.1 180.0 C350.6 191.7 346.7 197.3 342.6 205.6 C338.5 213.9 334.4 222.6 331.3 229.7 C328.2 236.8 325.9 243.1 324.1 248.2 C322.3 253.2 321.8 256.9 320.6 260.0 C319.4 263.1 317.5 265.8 316.9 266.9" stroke="#2b2b2b" stroke-width="0.9"/><path d="M375.7 135.7 C373.7 143.1 366.8 169.1 363.9 180.0 C361.0 190.9 360.1 193.5 358.2 201.3 C356.3 209.1 354.0 219.8 352.6 226.9 C351.2 234.0 350.3 238.4 349.7 243.9 C349.1 249.4 349.1 256.4 349.0 260.0 C348.9 263.6 349.2 264.6 349.2 265.5" stroke="#2b2b2b" stroke-width="0.9"/><path d="M375.7 135.7 C375.5 143.1 375.3 160.4 374.6 180.0 C373.9 199.6 372.2 241.0 371.7 253.2" stroke="#2b2b2b" stroke-width="0.9"/><path d="M368.6 167.3 L374.5 167.8" stroke="#2b2b2b" stroke-width="0.9"/><path d="M362.5 189.9 C363.4 190.0 366.1 190.1 368.0 190.3 C369.9 190.5 372.9 191.0 373.9 191.1" stroke="#2b2b2b" stroke-width="0.9"/><path d="M351.8 229.7 C352.6 229.3 354.2 227.8 356.8 227.6 C359.4 227.4 365.7 228.2 367.5 228.3" stroke="#2b2b2b" stroke-width="0.9"/><path d="M402.4 139.2 C400.9 149.3 395.6 184.9 393.3 200.0 C391.0 215.1 389.5 221.3 388.3 230.0 C387.1 238.7 386.5 248.3 386.1 252.0" stroke="#2b2b2b" stroke-width="0.9"/><path d="M402.4 139.2 C401.3 149.3 397.5 184.9 396.0 200.0 C394.5 215.1 393.8 220.7 393.2 230.0 C392.6 239.3 392.6 251.3 392.5 255.6" stroke="#2b2b2b" stroke-width="0.9"/><path d="M402.4 139.2 C404.0 149.3 409.7 184.9 412.0 200.0 C414.3 215.1 415.2 219.2 416.3 230.0 C417.4 240.8 418.1 259.0 418.5 264.8" stroke="#2b2b2b" stroke-width="0.9"/><path d="M402.4 139.2 C405.0 149.3 414.1 184.9 418.2 200.0 C422.3 215.1 424.5 218.6 427.0 230.0 C429.5 241.4 432.3 262.0 433.4 268.4" stroke="#2b2b2b" stroke-width="0.9"/><path d="M399.5 167.2 L405.5 167.2" stroke="#2b2b2b" stroke-width="0.9"/><path d="M399.5 190.4 C400.2 190.4 402.6 190.2 404.0 190.2 C405.4 190.2 407.3 190.5 408.0 190.6" stroke="#2b2b2b" stroke-width="0.9"/><path d="M396.0 230.6 C397.5 230.7 402.1 230.6 405.0 231.0 C407.9 231.4 412.2 232.6 413.7 232.9" stroke="#2b2b2b" stroke-width="0.9"/><path d="M343.5 268.4 C342.1 270.8 337.6 278.1 335.3 282.6 C333.0 287.1 331.4 289.9 329.7 295.3 C328.0 300.7 326.3 309.5 325.0 315.0 C323.7 320.5 323.1 322.6 321.8 328.4 C320.6 334.2 318.9 341.1 317.5 349.7 C316.1 358.3 313.9 374.9 313.2 380.0" stroke="#2b2b2b" stroke-width="0.9"/><path d="M287.0 339.0 C286.4 341.0 285.4 346.7 283.4 351.1 C281.4 355.5 278.4 361.2 274.9 365.3 C271.3 369.4 264.2 374.0 262.1 375.7" stroke="#2b2b2b" stroke-width="0.9"/><path d="M274.2 388.5 C273.5 390.6 270.8 397.1 269.9 401.3 C268.9 405.6 268.9 409.0 268.5 414.0 C268.1 419.0 267.9 428.2 267.8 431.1" stroke="#2b2b2b" stroke-width="0.9"/><path d="M278.4 416.9 C278.3 419.5 278.4 427.0 277.7 432.5 C277.0 438.0 274.8 447.1 274.2 450.0" stroke="#2b2b2b" stroke-width="0.9"/><path d="M292.6 346.9 C296.3 347.6 307.6 349.6 314.7 351.1 C321.8 352.6 328.1 354.4 335.0 356.1 C341.9 357.8 349.2 359.7 356.3 361.1 C363.4 362.5 371.2 363.7 377.6 364.6 C384.0 365.6 389.0 366.9 394.7 366.8 C400.4 366.8 406.5 365.2 412.0 364.3 C417.5 363.4 425.1 361.9 427.7 361.4" stroke="#2b2b2b" stroke-width="0.9"/><path d="M294.8 379.5 C296.0 376.7 298.6 366.5 301.9 362.5 C305.2 358.5 310.2 356.8 314.7 355.4 C319.2 354.0 324.1 351.6 328.9 354.0 C333.7 356.4 339.4 366.9 343.5 370.0 C347.6 373.1 348.1 370.2 353.5 372.8 C358.9 375.4 372.4 383.5 376.2 385.6" stroke="#2b2b2b" stroke-width="0.9"/><path d="M297.6 372.1 C296.9 374.1 293.8 380.5 293.4 384.2 C293.0 387.9 293.9 390.8 295.5 394.1 C297.1 397.4 299.9 401.0 303.3 404.1 C306.7 407.2 312.6 410.2 316.1 412.6 C319.7 415.0 321.5 416.4 324.6 418.3 C327.8 420.2 331.1 422.5 335.0 424.0 C338.9 425.5 344.5 426.4 347.8 427.5 C351.1 428.6 353.7 429.9 354.9 430.4" stroke="#2b2b2b" stroke-width="0.9"/><path d="M377.6 362.5 C379.5 363.0 385.2 363.9 389.0 365.3 C392.8 366.7 397.9 369.5 400.3 371.0 C402.7 372.5 401.8 372.0 403.5 374.2 C405.2 376.4 408.9 380.6 410.6 384.1 C412.3 387.7 413.5 391.5 413.5 395.5 C413.5 399.5 412.3 404.8 410.6 408.3 C408.9 411.9 406.1 414.4 403.5 416.8 C400.9 419.2 397.9 421.1 395.0 422.5 C392.1 423.9 389.5 424.3 386.1 425.4 C382.7 426.5 376.7 428.4 374.8 429.0" stroke="#2b2b2b" stroke-width="0.9"/><path d="M292.6 419.7 C292.9 425.0 293.7 442.6 294.1 451.3 C294.5 460.0 294.7 468.6 294.8 472.0" stroke="#2b2b2b" stroke-width="0.9"/><path d="M323.2 419.0 C323.1 424.2 322.6 440.7 322.5 450.0 C322.4 459.3 322.5 470.7 322.5 474.8" stroke="#2b2b2b" stroke-width="0.9"/><path d="M284.1 430.0 C284.9 426.7 287.2 416.3 289.0 410.0 C290.8 403.7 293.8 395.0 294.8 392.0" stroke="#2b2b2b" stroke-width="0.9"/><path d="M278.4 430.0 C279.7 425.8 283.5 410.9 286.0 405.0 C288.5 399.1 292.2 396.6 293.4 394.9" stroke="#2b2b2b" stroke-width="0.9"/><path d="M390.4 425.4 C390.5 429.5 391.1 441.8 391.1 450.0 C391.1 458.2 390.5 470.6 390.4 474.7" stroke="#2b2b2b" stroke-width="0.9"/><path d="M389.7 426.1 C389.4 427.9 388.6 432.6 387.6 436.8 C386.7 441.0 387.3 444.9 384.0 451.3 C380.7 457.8 370.4 471.5 367.7 475.5" stroke="#2b2b2b" stroke-width="0.9"/><path d="M354.9 308.5 C354.4 311.8 352.9 322.0 352.0 328.4 C351.1 334.8 349.8 341.0 349.2 346.9 C348.6 352.8 348.4 358.4 348.5 363.9 C348.6 369.4 349.7 377.3 349.9 380.0" stroke="#2b2b2b" stroke-width="0.9"/><path d="M363.4 300.0 L345.7 314.2" stroke="#2b2b2b" stroke-width="0.9"/><path d="M377.6 289.7 C375.2 291.1 367.0 295.2 363.0 298.0 C359.0 300.8 355.6 304.7 353.5 306.7 C351.4 308.7 351.1 309.4 350.6 310.0" stroke="#2b2b2b" stroke-width="0.9"/><path d="M371.2 272.6 C369.9 275.0 365.8 282.1 363.4 286.8 C361.0 291.5 358.4 297.4 357.0 301.0 C355.6 304.6 355.2 307.2 354.9 308.5" stroke="#2b2b2b" stroke-width="0.9"/><path d="M392.5 272.6 C392.9 275.5 394.4 283.5 394.7 289.7 C394.9 295.9 394.1 306.6 394.0 310.0" stroke="#2b2b2b" stroke-width="0.9"/><path d="M401.8 300.0 C400.9 302.4 398.1 309.7 396.1 314.2 C394.1 318.7 390.8 324.9 389.7 327.0" stroke="#2b2b2b" stroke-width="0.9"/><path d="M354.9 319.9 C357.7 320.4 366.4 321.0 371.9 322.7 C377.3 324.4 385.0 328.6 387.6 329.8" stroke="#2b2b2b" stroke-width="0.9"/><path d="M354.9 319.9 C355.4 322.0 354.9 329.6 357.7 332.7 C360.5 335.8 366.8 337.2 371.9 338.4 C377.0 339.6 385.6 339.6 388.3 339.8" stroke="#2b2b2b" stroke-width="0.9"/><path d="M404.3 270.5 C405.2 272.5 407.4 277.5 410.0 282.6 C412.6 287.7 417.9 294.1 419.9 301.0 C421.9 307.9 421.6 320.2 422.0 324.1" stroke="#2b2b2b" stroke-width="0.9"/><path d="M411.4 269.8 C412.6 272.2 415.7 279.3 418.5 284.0 C421.3 288.7 425.1 292.4 428.4 298.2 C431.7 303.9 436.7 315.1 438.4 318.5" stroke="#2b2b2b" stroke-width="0.9"/><path d="M421.3 269.1 C422.7 271.1 427.2 276.5 429.8 281.1 C432.4 285.7 435.3 290.1 436.9 296.8 C438.4 303.5 439.0 314.6 439.1 321.3 C439.2 328.0 438.7 332.4 437.6 336.9 C436.5 341.4 434.7 345.2 432.7 348.3 C430.7 351.4 428.7 353.3 425.6 355.4 C422.5 357.5 418.5 359.2 414.2 361.1 C409.9 363.0 402.4 365.9 400.0 366.8" stroke="#2b2b2b" stroke-width="0.9"/><path d="M446.9 295.3 C446.9 297.8 447.1 304.5 446.9 310.0 C446.7 315.5 446.4 320.6 445.5 328.4 C444.6 336.2 442.6 348.2 441.2 356.8 C439.8 365.4 437.6 376.1 436.9 380.0" stroke="#2b2b2b" stroke-width="0.9"/><path d="M438.4 334.1 C437.0 337.9 432.3 349.2 429.8 356.8 C427.3 364.4 424.5 376.1 423.4 380.0" stroke="#2b2b2b" stroke-width="0.9"/><path d="M417.7 381.3 L422.0 401.2" stroke="#2b2b2b" stroke-width="0.9"/><path d="M415.6 402.6 C416.1 405.9 417.2 416.3 418.4 422.5 C419.6 428.7 421.4 436.4 422.7 440.0 C423.9 443.6 425.4 443.5 425.9 444.2" stroke="#2b2b2b" stroke-width="0.9"/><path d="M411.0 437.8 C411.2 441.2 412.5 452.0 412.4 458.4 C412.3 464.8 410.6 473.2 410.3 476.2" stroke="#2b2b2b" stroke-width="0.9"/></g></svg>
</body></html>
